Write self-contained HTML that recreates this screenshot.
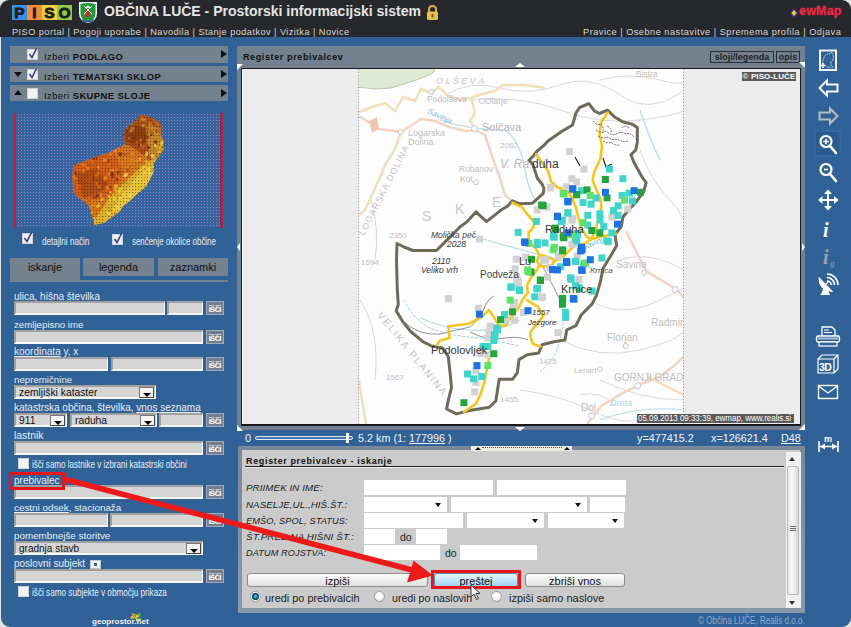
<!DOCTYPE html><html><head><meta charset="utf-8"><style>
*{margin:0;padding:0;box-sizing:border-box}
html,body{width:851px;height:627px;overflow:hidden;background:#e4e4e4;font-family:"Liberation Sans",sans-serif;font-size:10px}
.a{position:absolute}
.t{position:absolute;white-space:nowrap;line-height:12px}
.row{position:absolute;left:10px;width:218px;height:17px;background:#74828f}
.cb{position:absolute;width:11px;height:11px;background:#f2f2f4;border:1px solid #d0d0d0}
.lbl{position:absolute;left:14px;color:#e6ecf4;font-size:10px;white-space:nowrap;line-height:12px}
.inp{position:absolute;height:14px;background:#d5d5d5;border-top:2px solid #a0a0a0;border-left:2px solid #a0a0a0;border-bottom:2px solid #f8f8f8;border-right:1px solid #f8f8f8}
.isci{position:absolute;width:18px;height:14px;background:#727e8c;border:1px solid #a2adba;color:#f4f6f8;font-size:9.5px;font-weight:bold;line-height:13px;text-align:center;letter-spacing:-.9px;text-indent:-1px}
.dd{position:absolute;width:15px;height:11px;background:#f4f4f4;border:1px solid #777;border-right-color:#444;border-bottom-color:#444}
.dd:after{content:"";position:absolute;left:3px;top:5px;border-left:4px solid transparent;border-right:4px solid transparent;border-top:4px solid #000}
.fi{position:absolute;height:15px;background:#fff}
.fsel:after{content:"";position:absolute;right:6px;top:6px;border-left:3.5px solid transparent;border-right:3.5px solid transparent;border-top:4px solid #111}
.btn{position:absolute;height:14px;border:1px solid #8c8c8c;border-radius:3px;background:linear-gradient(#fefefe,#dedede);text-align:center;font-size:11px;line-height:14.5px;color:#111}
.rad{position:absolute;width:11px;height:11px;border-radius:50%;border:1px solid #a0a0a0;background:radial-gradient(circle at 45% 40%,#fff 30%,#d4d4d4)}
.it{position:absolute;font-style:italic;color:#222;white-space:nowrap;line-height:12px}
.cond{display:inline-block;transform-origin:0 50%}
</style></head><body><div class="a" style="left:0;top:0;width:851px;height:37px;background:#26282c;border-radius:9px 9px 0 0"></div><div class="a" style="left:1px;top:37px;width:850px;height:590px;background:#316297;border-radius:0 0 9px 9px"></div><div class="a" style="left:12px;top:5px;width:15px;height:15px;background:#3a8fe3;color:#1e1e1e;font:bold 15.5px/16px 'Liberation Sans';-webkit-text-stroke:.9px #1e1e1e;text-align:center">P</div><div class="a" style="left:27px;top:5px;width:15px;height:15px;background:#f28c3c;color:#1e1e1e;font:bold 15.5px/16px 'Liberation Sans';-webkit-text-stroke:.9px #1e1e1e;text-align:center">I</div><div class="a" style="left:42px;top:5px;width:15px;height:15px;background:#f4cf3e;color:#1e1e1e;font:bold 15.5px/16px 'Liberation Sans';-webkit-text-stroke:.9px #1e1e1e;text-align:center">S</div><div class="a" style="left:57px;top:5px;width:15px;height:15px;background:#8fcb47;color:#1e1e1e;font:bold 15.5px/16px 'Liberation Sans';-webkit-text-stroke:.9px #1e1e1e;text-align:center">O</div><svg class="a" style="left:78px;top:1px" width="20" height="23" viewBox="0 0 20 23">
<path d="M1 1 H19 V12 Q19 20 10 22 Q1 20 1 12 Z" fill="#f2f2f2"/>
<path d="M2.5 3 Q9 1 17.5 3 V12 Q17.5 19 10 21 Q2.5 19 2.5 12 Z" fill="#1f9a3a"/>
<path d="M4 18 Q10 22 16 18 L15 20 Q10 22.5 5 20Z" fill="#2a4fb8"/>
<rect x="8" y="8" width="4" height="8" fill="#d62828"/>
<path d="M10 4 L13 7 L7 7Z" fill="#e8e8e8"/>
<path d="M6 5 L14 13 M14 5 L6 13" stroke="#f0f0f0" stroke-width="1"/>
</svg><div class="t" style="left:104px;top:3px;font:bold 14px/16px 'Liberation Sans';color:#e4e4e4">OBČINA LUČE - Prostorski informacijski sistem</div><svg class="a" style="left:425px;top:4px" width="15" height="17" viewBox="0 0 15 17">
<path d="M4 8 V5.5 Q4 2 7.5 2 Q11 2 11 5.5 V8" fill="none" stroke="#d9b23a" stroke-width="2"/>
<rect x="2" y="7.5" width="11" height="8.5" rx="1.5" fill="#e6c14a"/>
<rect x="6.5" y="10" width="2" height="3.5" fill="#7a5a10"/>
</svg><div class="t" style="left:12px;top:25.5px;font-size:9.2px;letter-spacing:.45px;color:#d6d6d6">PISO portal | Pogoji uporabe | Navodila | Stanje podatkov | Vizitka | Novice</div><div class="t" style="left:583px;top:25.5px;font-size:9.2px;letter-spacing:.5px;color:#d6d6d6">Pravice | Osebne nastavitve | Spremema profila | Odjava</div><svg class="a" style="left:789px;top:7px" width="10" height="12" viewBox="0 0 10 12"><path d="M5 1 L9 6 L5 11 L1 6Z" fill="#5a1fa0"/><path d="M5 3 L7.5 6 L5 9 L2.5 6Z" fill="#c8e41a"/></svg><div class="t" style="left:799px;top:4px;font:bold 12.5px/15px 'Liberation Sans';color:#e82a3a;-webkit-text-stroke:.4px #e82a3a;text-shadow:0 0 1px #3a1a6a;letter-spacing:.2px">ewMap</div><div class="row" style="top:46px;height:17px"></div><div class="cb" style="left:27px;top:49px"><svg class="a" style="left:0;top:-2px" width="10" height="11" viewBox="0 0 10 11"><path d="M1.5 6 L4 9.5 L8.5 0.5" fill="none" stroke="#2f3f8f" stroke-width="1.6"/></svg></div><div class="t" style="left:44px;top:51px;font-size:9.4px;letter-spacing:.45px;color:#111">Izberi <b>PODLAGO</b></div><div class="a" style="left:221px;top:50px;width:0;height:0;border-top:4.5px solid transparent;border-bottom:4.5px solid transparent;border-left:6px solid #111"></div><div class="row" style="top:66px;height:16px"></div><div class="cb" style="left:27px;top:69px"><svg class="a" style="left:0;top:-2px" width="10" height="11" viewBox="0 0 10 11"><path d="M1.5 6 L4 9.5 L8.5 0.5" fill="none" stroke="#2f3f8f" stroke-width="1.6"/></svg></div><div class="t" style="left:44px;top:71px;font-size:9.4px;letter-spacing:.45px;color:#111">Izberi <b>TEMATSKI SKLOP</b></div><div class="a" style="left:221px;top:70px;width:0;height:0;border-top:4.5px solid transparent;border-bottom:4.5px solid transparent;border-left:6px solid #111"></div><div class="a" style="left:14px;top:72px;width:0;height:0;border-left:4px solid transparent;border-right:4px solid transparent;border-top:5px solid #111"></div><div class="row" style="top:85px;height:16px"></div><div class="cb" style="left:27px;top:88px"></div><div class="t" style="left:44px;top:90px;font-size:9.4px;letter-spacing:.45px;color:#111">Izberi <b>SKUPNE SLOJE</b></div><div class="a" style="left:221px;top:89px;width:0;height:0;border-top:4.5px solid transparent;border-bottom:4.5px solid transparent;border-left:6px solid #111"></div><div class="a" style="left:14px;top:90px;width:0;height:0;border-left:4px solid transparent;border-right:4px solid transparent;border-bottom:5px solid #111"></div><svg class="a" style="left:14px;top:113px" width="210" height="115" viewBox="0 0 210 115"><defs><pattern id="dots" width="3" height="3" patternUnits="userSpaceOnUse"><rect width="3" height="3" fill="#3564a0"/><rect x="1" y="1" width="1" height="1" fill="#9a82b0"/></pattern><pattern id="dk" width="3" height="3" patternUnits="userSpaceOnUse"><rect x="1" y="1" width="1.2" height="1.2" fill="#3a1a08" opacity=".55"/></pattern><clipPath id="mc"><polygon points="126.4,1.8 136.0,3.7 143.6,8.5 147.4,12.3 146.5,21.9 149.3,27.6 149.3,37.2 143.6,44.8 139.8,50.6 139.8,58.2 136.0,65.9 132.1,73.6 122.6,81.2 116.8,87.0 109.2,92.7 105.3,98.4 97.7,104.2 90.0,109.9 80.4,111.8 78.5,104.2 74.7,92.7 65.1,85.0 59.4,79.3 58.4,64.0 59.4,52.5 69.0,48.7 84.3,42.9 93.8,40.1 103.4,35.3 111.0,31.4 109.2,21.9 113.0,14.2 122.6,6.6"/></clipPath></defs><rect width="210" height="115" fill="url(#dots)"/><rect x="0" y="0" width="2" height="115" fill="#c02040"/><rect x="206" y="0" width="3" height="115" fill="#a02848"/><g clip-path="url(#mc)"><rect x="50" y="0" width="110" height="115" fill="#d8761c"/><polygon points="105,0 160,0 160,50 140,50 120,35 108,30" fill="#a8501a"/><polygon points="130,10 160,20 160,60 140,60 135,40" fill="#c88a28"/><polygon points="55,45 100,40 110,60 95,85 60,85" fill="#d2601a"/><polygon points="75,115 95,85 115,65 135,48 160,40 160,60 140,80 120,95 100,115" fill="#e0b42a"/><polygon points="100,90 125,62 150,45 145,70 120,90 105,105" fill="#ecd040" opacity=".8"/><polygon points="60,60 85,55 95,75 70,85" fill="#8a3a10" opacity=".5"/><polygon points="110,10 135,15 130,35 112,28" fill="#7a300c" opacity=".5"/><rect width="210" height="115" fill="url(#dk)"/><rect x="85.8" y="17.0" width="1.7" height="2.8" fill="#e0701a" opacity=".8"/><rect x="89.7" y="6.6" width="2.0" height="1.7" fill="#c85a18" opacity=".8"/><rect x="94.7" y="27.2" width="2.6" height="3.6" fill="#c85a18" opacity=".8"/><rect x="66.8" y="25.2" width="3.9" height="2.9" fill="#c85a18" opacity=".8"/><rect x="92.7" y="110.3" width="2.9" height="1.8" fill="#f0d040" opacity=".8"/><rect x="94.8" y="61.1" width="2.3" height="3.5" fill="#c85a18" opacity=".8"/><rect x="72.2" y="65.7" width="2.4" height="2.9" fill="#b84a12" opacity=".8"/><rect x="61.0" y="6.7" width="2.7" height="2.8" fill="#b84a12" opacity=".8"/><rect x="128.8" y="52.6" width="2.4" height="2.1" fill="#f4dc58" opacity=".8"/><rect x="72.1" y="88.1" width="2.9" height="2.8" fill="#e0701a" opacity=".8"/><rect x="138.1" y="82.4" width="3.0" height="1.7" fill="#7a2e0c" opacity=".8"/><rect x="103.6" y="18.6" width="1.9" height="2.7" fill="#7a2e0c" opacity=".8"/><rect x="58.7" y="75.5" width="2.9" height="3.7" fill="#c85a18" opacity=".8"/><rect x="84.8" y="78.6" width="2.7" height="3.5" fill="#c85a18" opacity=".8"/><rect x="61.5" y="10.6" width="2.7" height="3.2" fill="#7a2e0c" opacity=".8"/><rect x="60.8" y="79.3" width="4.0" height="3.6" fill="#c85a18" opacity=".8"/><rect x="82.0" y="43.6" width="1.6" height="2.7" fill="#7a2e0c" opacity=".8"/><rect x="71.0" y="13.2" width="2.0" height="2.2" fill="#e0701a" opacity=".8"/><rect x="125.1" y="45.0" width="1.7" height="2.6" fill="#f4dc58" opacity=".8"/><rect x="107.2" y="99.8" width="3.7" height="2.2" fill="#f4dc58" opacity=".8"/><rect x="94.5" y="40.5" width="3.9" height="1.9" fill="#f08a28" opacity=".8"/><rect x="71.7" y="26.2" width="1.5" height="3.6" fill="#b84a12" opacity=".8"/><rect x="72.3" y="31.9" width="2.5" height="2.4" fill="#b84a12" opacity=".8"/><rect x="108.8" y="107.7" width="3.9" height="3.1" fill="#c85a18" opacity=".8"/><rect x="125.3" y="51.6" width="2.5" height="2.5" fill="#c89020" opacity=".8"/><rect x="64.8" y="71.7" width="2.0" height="4.0" fill="#e0701a" opacity=".8"/><rect x="96.9" y="12.4" width="1.6" height="1.5" fill="#c85a18" opacity=".8"/><rect x="69.4" y="11.5" width="3.0" height="1.7" fill="#7a2e0c" opacity=".8"/><rect x="74.8" y="42.5" width="3.9" height="3.0" fill="#7a2e0c" opacity=".8"/><rect x="100.0" y="13.0" width="4.0" height="2.7" fill="#f08a28" opacity=".8"/><rect x="101.0" y="9.7" width="3.4" height="3.4" fill="#e0701a" opacity=".8"/><rect x="100.5" y="78.2" width="1.6" height="3.9" fill="#c89020" opacity=".8"/><rect x="105.2" y="16.6" width="3.8" height="3.4" fill="#c87020" opacity=".8"/><rect x="83.3" y="72.6" width="3.2" height="2.2" fill="#e0701a" opacity=".8"/><rect x="89.8" y="18.9" width="2.8" height="3.4" fill="#b84a12" opacity=".8"/><rect x="86.3" y="25.2" width="3.5" height="3.5" fill="#b84a12" opacity=".8"/><rect x="125.3" y="25.6" width="2.7" height="3.3" fill="#c87020" opacity=".8"/><rect x="149.0" y="89.3" width="2.1" height="3.2" fill="#f08a28" opacity=".8"/><rect x="145.9" y="50.5" width="3.9" height="2.4" fill="#d8a828" opacity=".8"/><rect x="75.9" y="25.6" width="2.3" height="2.7" fill="#b84a12" opacity=".8"/><rect x="148.6" y="69.0" width="2.7" height="3.1" fill="#e0701a" opacity=".8"/><rect x="131.0" y="9.6" width="3.8" height="3.5" fill="#8a3a10" opacity=".8"/><rect x="126.3" y="54.0" width="2.6" height="3.1" fill="#e8c030" opacity=".8"/><rect x="63.2" y="106.9" width="2.7" height="3.4" fill="#f4dc58" opacity=".8"/><rect x="63.1" y="18.0" width="1.6" height="3.0" fill="#b84a12" opacity=".8"/><rect x="99.2" y="74.1" width="3.6" height="4.0" fill="#c89020" opacity=".8"/><rect x="117.4" y="39.6" width="2.9" height="1.6" fill="#c87020" opacity=".8"/><rect x="130.9" y="82.1" width="2.8" height="3.8" fill="#f0d040" opacity=".8"/><rect x="96.2" y="98.5" width="1.6" height="2.0" fill="#e8c030" opacity=".8"/><rect x="102.6" y="86.3" width="2.1" height="2.5" fill="#d8a828" opacity=".8"/><rect x="67.5" y="102.8" width="3.7" height="3.2" fill="#d8a828" opacity=".8"/><rect x="132.4" y="58.4" width="1.8" height="1.9" fill="#c89020" opacity=".8"/><rect x="103.5" y="98.6" width="3.0" height="3.4" fill="#e8c030" opacity=".8"/><rect x="69.2" y="16.0" width="3.3" height="2.9" fill="#c85a18" opacity=".8"/><rect x="86.0" y="58.6" width="2.7" height="3.4" fill="#c85a18" opacity=".8"/><rect x="138.9" y="6.4" width="2.2" height="3.4" fill="#b8581a" opacity=".8"/><rect x="103.2" y="63.5" width="2.6" height="3.0" fill="#e0701a" opacity=".8"/><rect x="103.0" y="57.9" width="2.6" height="2.8" fill="#7a2e0c" opacity=".8"/><rect x="100.4" y="106.4" width="3.7" height="3.9" fill="#c89020" opacity=".8"/><rect x="79.7" y="63.2" width="3.6" height="1.8" fill="#b84a12" opacity=".8"/><rect x="66.6" y="50.0" width="3.2" height="2.6" fill="#e0701a" opacity=".8"/><rect x="75.2" y="34.2" width="3.7" height="1.9" fill="#e0701a" opacity=".8"/><rect x="123.0" y="74.6" width="2.1" height="1.8" fill="#e8c030" opacity=".8"/><rect x="99.4" y="84.4" width="2.5" height="2.7" fill="#f0d040" opacity=".8"/><rect x="149.0" y="94.1" width="3.3" height="4.0" fill="#b84a12" opacity=".8"/><rect x="93.4" y="47.6" width="2.3" height="3.3" fill="#7a2e0c" opacity=".8"/><rect x="56.9" y="62.6" width="3.3" height="2.5" fill="#f08a28" opacity=".8"/><rect x="104.2" y="33.4" width="1.8" height="3.8" fill="#e0701a" opacity=".8"/><rect x="76.7" y="99.0" width="2.2" height="1.6" fill="#f0d040" opacity=".8"/><rect x="129.0" y="30.6" width="3.5" height="3.6" fill="#b8581a" opacity=".8"/><rect x="119.2" y="106.9" width="1.9" height="3.8" fill="#f08a28" opacity=".8"/><rect x="109.2" y="79.1" width="2.2" height="3.5" fill="#f0d040" opacity=".8"/><rect x="72.4" y="101.2" width="3.8" height="3.1" fill="#d8a828" opacity=".8"/><rect x="131.2" y="9.5" width="1.7" height="3.7" fill="#b8581a" opacity=".8"/><rect x="98.1" y="38.3" width="2.5" height="3.8" fill="#c85a18" opacity=".8"/><rect x="114.1" y="4.9" width="3.8" height="3.9" fill="#b8581a" opacity=".8"/><rect x="79.9" y="20.5" width="3.1" height="2.8" fill="#7a2e0c" opacity=".8"/><rect x="74.6" y="50.4" width="2.2" height="3.5" fill="#b84a12" opacity=".8"/><rect x="149.5" y="4.2" width="3.3" height="2.9" fill="#8a3a10" opacity=".8"/><rect x="73.0" y="53.6" width="1.8" height="3.5" fill="#f08a28" opacity=".8"/><rect x="96.1" y="55.9" width="3.9" height="2.3" fill="#f08a28" opacity=".8"/><rect x="75.4" y="25.9" width="3.6" height="3.3" fill="#b84a12" opacity=".8"/><rect x="115.4" y="45.7" width="4.0" height="3.6" fill="#d88a28" opacity=".8"/><rect x="56.4" y="70.7" width="2.6" height="1.6" fill="#7a2e0c" opacity=".8"/><rect x="118.2" y="43.0" width="3.2" height="2.2" fill="#c87020" opacity=".8"/><rect x="78.0" y="33.1" width="2.0" height="2.2" fill="#f08a28" opacity=".8"/><rect x="55.3" y="41.1" width="3.9" height="2.9" fill="#7a2e0c" opacity=".8"/><rect x="78.2" y="109.1" width="2.0" height="2.0" fill="#d8a828" opacity=".8"/><rect x="86.9" y="9.5" width="2.8" height="2.0" fill="#7a2e0c" opacity=".8"/><rect x="102.9" y="0.6" width="3.5" height="1.9" fill="#7a2e0c" opacity=".8"/><rect x="110.7" y="44.5" width="2.3" height="2.1" fill="#d88a28" opacity=".8"/><rect x="110.6" y="59.8" width="3.1" height="3.3" fill="#e8c030" opacity=".8"/><rect x="138.5" y="44.0" width="3.3" height="2.7" fill="#d8a828" opacity=".8"/><rect x="82.0" y="69.9" width="1.6" height="3.6" fill="#b84a12" opacity=".8"/><rect x="139.7" y="70.9" width="1.8" height="2.8" fill="#c89020" opacity=".8"/><rect x="102.9" y="94.3" width="3.6" height="3.0" fill="#f0d040" opacity=".8"/><rect x="139.8" y="77.2" width="1.7" height="1.6" fill="#b84a12" opacity=".8"/><rect x="115.5" y="108.4" width="3.6" height="2.9" fill="#f08a28" opacity=".8"/><rect x="114.6" y="70.8" width="2.7" height="1.5" fill="#e8c030" opacity=".8"/><rect x="130.8" y="84.6" width="3.7" height="1.7" fill="#c85a18" opacity=".8"/><rect x="105.0" y="84.3" width="2.1" height="1.7" fill="#f4dc58" opacity=".8"/><rect x="80.2" y="82.4" width="2.1" height="3.1" fill="#b84a12" opacity=".8"/><rect x="98.7" y="95.5" width="2.7" height="3.2" fill="#f0d040" opacity=".8"/><rect x="127.9" y="69.7" width="1.7" height="1.9" fill="#e8c030" opacity=".8"/><rect x="79.1" y="84.0" width="3.1" height="1.8" fill="#7a2e0c" opacity=".8"/><rect x="100.8" y="54.9" width="3.2" height="3.2" fill="#e0701a" opacity=".8"/><rect x="82.6" y="58.4" width="2.7" height="3.4" fill="#f08a28" opacity=".8"/><rect x="149.4" y="62.0" width="3.9" height="3.8" fill="#d8a828" opacity=".8"/><rect x="56.7" y="51.9" width="3.9" height="2.6" fill="#c85a18" opacity=".8"/><rect x="80.5" y="23.7" width="1.7" height="1.7" fill="#b84a12" opacity=".8"/><rect x="126.0" y="29.6" width="1.8" height="3.6" fill="#d88a28" opacity=".8"/><rect x="103.3" y="100.2" width="2.1" height="3.7" fill="#d8a828" opacity=".8"/><rect x="101.2" y="2.8" width="3.9" height="3.2" fill="#e0701a" opacity=".8"/><rect x="93.5" y="82.2" width="2.4" height="2.3" fill="#f4dc58" opacity=".8"/><rect x="134.8" y="0.2" width="3.6" height="1.8" fill="#d88a28" opacity=".8"/><rect x="143.0" y="80.6" width="2.1" height="1.7" fill="#7a2e0c" opacity=".8"/><rect x="92.1" y="98.3" width="2.4" height="2.6" fill="#f0d040" opacity=".8"/><rect x="81.1" y="5.5" width="1.6" height="3.2" fill="#e0701a" opacity=".8"/><rect x="115.3" y="16.8" width="2.6" height="2.3" fill="#d88a28" opacity=".8"/><rect x="128.5" y="88.7" width="3.7" height="3.5" fill="#f08a28" opacity=".8"/><rect x="114.9" y="103.2" width="2.9" height="3.3" fill="#c85a18" opacity=".8"/><rect x="59.7" y="82.8" width="3.0" height="1.8" fill="#f08a28" opacity=".8"/><rect x="137.6" y="54.9" width="1.8" height="2.7" fill="#c89020" opacity=".8"/><rect x="87.6" y="33.6" width="2.5" height="2.1" fill="#7a2e0c" opacity=".8"/><rect x="100.9" y="75.6" width="1.9" height="1.9" fill="#f0d040" opacity=".8"/><rect x="74.7" y="102.4" width="2.9" height="2.6" fill="#f4dc58" opacity=".8"/><rect x="86.6" y="85.8" width="1.8" height="2.0" fill="#f4dc58" opacity=".8"/><rect x="63.6" y="38.6" width="2.3" height="2.4" fill="#e0701a" opacity=".8"/><rect x="131.9" y="22.8" width="3.4" height="2.5" fill="#8a3a10" opacity=".8"/><rect x="94.3" y="59.2" width="2.2" height="3.4" fill="#f08a28" opacity=".8"/><rect x="102.3" y="64.9" width="1.8" height="2.8" fill="#7a2e0c" opacity=".8"/><rect x="114.8" y="97.5" width="1.7" height="3.7" fill="#e8c030" opacity=".8"/><rect x="91.5" y="73.0" width="3.9" height="3.6" fill="#f08a28" opacity=".8"/><rect x="137.9" y="2.5" width="2.6" height="3.4" fill="#8a3a10" opacity=".8"/><rect x="131.4" y="109.4" width="1.5" height="2.5" fill="#f08a28" opacity=".8"/><rect x="143.0" y="93.3" width="3.9" height="2.1" fill="#f08a28" opacity=".8"/><rect x="65.4" y="17.4" width="3.9" height="1.8" fill="#c85a18" opacity=".8"/><rect x="133.4" y="79.2" width="1.7" height="3.4" fill="#f4dc58" opacity=".8"/><rect x="55.1" y="14.2" width="3.8" height="3.1" fill="#c85a18" opacity=".8"/><rect x="83.9" y="14.5" width="2.8" height="2.6" fill="#7a2e0c" opacity=".8"/><rect x="127.6" y="11.2" width="2.8" height="3.0" fill="#d88a28" opacity=".8"/><rect x="91.9" y="25.3" width="1.5" height="2.8" fill="#c85a18" opacity=".8"/><rect x="149.7" y="31.5" width="3.1" height="3.7" fill="#d8a828" opacity=".8"/><rect x="100.2" y="26.5" width="1.6" height="2.5" fill="#b84a12" opacity=".8"/><rect x="116.7" y="6.2" width="2.7" height="3.2" fill="#b8581a" opacity=".8"/><rect x="94.9" y="29.1" width="3.8" height="2.1" fill="#f08a28" opacity=".8"/><rect x="58.2" y="38.2" width="2.4" height="2.5" fill="#f08a28" opacity=".8"/><rect x="55.6" y="33.0" width="1.7" height="2.7" fill="#c85a18" opacity=".8"/><rect x="74.0" y="86.5" width="2.1" height="2.1" fill="#b84a12" opacity=".8"/><rect x="127.2" y="33.3" width="2.7" height="2.0" fill="#c87020" opacity=".8"/><rect x="76.2" y="47.1" width="3.9" height="1.9" fill="#e0701a" opacity=".8"/><rect x="92.4" y="24.1" width="1.9" height="1.6" fill="#c85a18" opacity=".8"/><rect x="60.7" y="44.4" width="3.3" height="4.0" fill="#7a2e0c" opacity=".8"/><rect x="143.5" y="37.2" width="3.1" height="2.8" fill="#e8c030" opacity=".8"/><rect x="99.4" y="35.2" width="3.6" height="4.0" fill="#f08a28" opacity=".8"/><rect x="97.0" y="12.3" width="2.2" height="2.4" fill="#e0701a" opacity=".8"/><rect x="145.8" y="14.0" width="2.5" height="3.4" fill="#b8581a" opacity=".8"/><rect x="84.3" y="90.8" width="1.6" height="2.7" fill="#f0d040" opacity=".8"/><rect x="90.4" y="103.9" width="2.3" height="3.3" fill="#e8c030" opacity=".8"/><rect x="100.1" y="71.4" width="3.5" height="3.4" fill="#e8c030" opacity=".8"/><rect x="58.9" y="3.9" width="3.5" height="1.7" fill="#e0701a" opacity=".8"/><rect x="73.5" y="7.1" width="2.3" height="2.2" fill="#c85a18" opacity=".8"/><rect x="146.0" y="69.7" width="3.4" height="3.2" fill="#7a2e0c" opacity=".8"/><rect x="142.8" y="33.6" width="3.8" height="3.1" fill="#c89020" opacity=".8"/><rect x="144.6" y="2.7" width="1.8" height="3.3" fill="#b8581a" opacity=".8"/><rect x="99.2" y="87.7" width="3.8" height="3.5" fill="#d8a828" opacity=".8"/><rect x="67.6" y="56.1" width="3.5" height="3.3" fill="#e0701a" opacity=".8"/><rect x="133.2" y="87.3" width="2.1" height="3.7" fill="#c85a18" opacity=".8"/><rect x="98.8" y="88.6" width="1.7" height="2.0" fill="#c89020" opacity=".8"/><rect x="126.5" y="27.9" width="3.1" height="2.7" fill="#8a3a10" opacity=".8"/><rect x="106.7" y="18.2" width="3.7" height="4.0" fill="#6a2a0a" opacity=".8"/><rect x="80.2" y="9.5" width="2.6" height="4.0" fill="#e0701a" opacity=".8"/><rect x="147.4" y="19.6" width="2.5" height="3.1" fill="#b8581a" opacity=".8"/><rect x="119.0" y="84.5" width="3.4" height="2.2" fill="#f0d040" opacity=".8"/><rect x="81.5" y="30.2" width="3.3" height="2.0" fill="#7a2e0c" opacity=".8"/><rect x="78.5" y="27.7" width="2.2" height="3.8" fill="#b84a12" opacity=".8"/><rect x="72.9" y="7.3" width="4.0" height="2.8" fill="#7a2e0c" opacity=".8"/><rect x="77.0" y="91.4" width="4.0" height="1.8" fill="#f08a28" opacity=".8"/><rect x="100.1" y="92.6" width="3.8" height="1.6" fill="#f4dc58" opacity=".8"/><rect x="82.9" y="13.5" width="3.0" height="3.6" fill="#b84a12" opacity=".8"/><rect x="73.4" y="8.5" width="3.7" height="2.6" fill="#c85a18" opacity=".8"/><rect x="79.7" y="87.9" width="1.8" height="3.0" fill="#e0701a" opacity=".8"/><rect x="113.9" y="24.6" width="2.4" height="1.6" fill="#d88a28" opacity=".8"/><rect x="150.0" y="4.3" width="3.5" height="3.5" fill="#b8581a" opacity=".8"/><rect x="93.9" y="42.0" width="2.3" height="2.0" fill="#c85a18" opacity=".8"/><rect x="130.6" y="61.9" width="2.5" height="3.5" fill="#f0d040" opacity=".8"/><rect x="118.1" y="17.5" width="1.7" height="1.9" fill="#c87020" opacity=".8"/><rect x="121.1" y="46.3" width="3.2" height="2.5" fill="#d88a28" opacity=".8"/><rect x="59.9" y="84.2" width="2.5" height="1.5" fill="#7a2e0c" opacity=".8"/><rect x="127.8" y="90.7" width="2.5" height="2.5" fill="#b84a12" opacity=".8"/><rect x="144.5" y="49.1" width="2.6" height="3.6" fill="#e8c030" opacity=".8"/><rect x="93.6" y="99.8" width="3.4" height="1.8" fill="#f4dc58" opacity=".8"/><rect x="59.9" y="16.1" width="1.7" height="3.1" fill="#f08a28" opacity=".8"/><rect x="90.2" y="57.0" width="2.4" height="1.9" fill="#b84a12" opacity=".8"/><rect x="71.3" y="7.6" width="2.7" height="3.5" fill="#f08a28" opacity=".8"/><rect x="146.9" y="22.3" width="3.6" height="1.6" fill="#b8581a" opacity=".8"/><rect x="141.7" y="35.5" width="3.8" height="2.5" fill="#c89020" opacity=".8"/><rect x="140.9" y="70.1" width="3.1" height="3.6" fill="#e8c030" opacity=".8"/><rect x="114.0" y="69.5" width="3.6" height="2.0" fill="#e8c030" opacity=".8"/><rect x="75.7" y="45.2" width="1.9" height="2.4" fill="#c85a18" opacity=".8"/><rect x="69.2" y="109.7" width="1.6" height="2.9" fill="#e8c030" opacity=".8"/><rect x="127.0" y="4.3" width="1.8" height="3.0" fill="#d88a28" opacity=".8"/><rect x="107.3" y="70.9" width="3.1" height="2.3" fill="#d8a828" opacity=".8"/><rect x="78.7" y="44.0" width="2.6" height="2.6" fill="#7a2e0c" opacity=".8"/><rect x="57.2" y="69.9" width="2.7" height="2.6" fill="#f08a28" opacity=".8"/><rect x="113.8" y="92.5" width="3.5" height="2.5" fill="#e8c030" opacity=".8"/><rect x="61.4" y="40.5" width="1.7" height="2.6" fill="#7a2e0c" opacity=".8"/><rect x="103.5" y="4.6" width="1.7" height="3.3" fill="#b84a12" opacity=".8"/><rect x="128.9" y="57.8" width="3.4" height="3.7" fill="#f0d040" opacity=".8"/><rect x="117.0" y="88.6" width="3.6" height="4.0" fill="#f0d040" opacity=".8"/><rect x="124.5" y="92.1" width="1.8" height="3.7" fill="#b84a12" opacity=".8"/><rect x="82.3" y="91.6" width="3.2" height="3.3" fill="#e8c030" opacity=".8"/><rect x="76.0" y="94.1" width="3.4" height="1.9" fill="#c89020" opacity=".8"/><rect x="140.2" y="31.1" width="1.9" height="2.8" fill="#f4dc58" opacity=".8"/><rect x="142.4" y="23.5" width="3.0" height="2.1" fill="#d88a28" opacity=".8"/><rect x="90.4" y="22.5" width="1.9" height="3.8" fill="#f08a28" opacity=".8"/><rect x="119.6" y="101.2" width="3.5" height="2.2" fill="#b84a12" opacity=".8"/><rect x="128.0" y="5.5" width="3.9" height="2.6" fill="#d88a28" opacity=".8"/><rect x="104.5" y="77.8" width="2.1" height="2.8" fill="#f0d040" opacity=".8"/><rect x="136.4" y="83.4" width="2.2" height="4.0" fill="#7a2e0c" opacity=".8"/><rect x="109.8" y="40.7" width="2.6" height="1.9" fill="#8a3a10" opacity=".8"/><rect x="125.6" y="5.5" width="2.1" height="3.1" fill="#c87020" opacity=".8"/><rect x="148.5" y="66.2" width="3.3" height="3.4" fill="#7a2e0c" opacity=".8"/><rect x="76.1" y="32.9" width="2.5" height="2.4" fill="#f08a28" opacity=".8"/><rect x="59.5" y="55.2" width="3.1" height="1.6" fill="#c85a18" opacity=".8"/><rect x="55.2" y="40.1" width="2.8" height="2.8" fill="#e0701a" opacity=".8"/><rect x="94.3" y="34.0" width="2.0" height="3.1" fill="#b84a12" opacity=".8"/><rect x="100.1" y="15.2" width="3.3" height="2.6" fill="#b84a12" opacity=".8"/><rect x="61.0" y="16.4" width="2.5" height="2.2" fill="#7a2e0c" opacity=".8"/><rect x="56.1" y="72.9" width="3.7" height="3.0" fill="#c85a18" opacity=".8"/><rect x="110.0" y="68.0" width="3.3" height="2.1" fill="#c89020" opacity=".8"/><rect x="140.8" y="5.0" width="1.6" height="2.0" fill="#c87020" opacity=".8"/><rect x="70.1" y="103.0" width="1.5" height="2.9" fill="#f0d040" opacity=".8"/><rect x="144.4" y="16.1" width="2.8" height="3.1" fill="#b8581a" opacity=".8"/><rect x="116.5" y="46.9" width="1.9" height="2.3" fill="#c87020" opacity=".8"/><rect x="83.5" y="5.5" width="3.3" height="1.5" fill="#f08a28" opacity=".8"/><rect x="135.2" y="84.2" width="1.7" height="3.1" fill="#f08a28" opacity=".8"/><rect x="71.7" y="112.6" width="2.1" height="1.6" fill="#d8a828" opacity=".8"/><rect x="86.9" y="84.7" width="3.3" height="2.2" fill="#d8a828" opacity=".8"/><rect x="107.6" y="49.3" width="3.9" height="2.2" fill="#c87020" opacity=".8"/><rect x="143.2" y="101.0" width="3.7" height="1.5" fill="#e0701a" opacity=".8"/><rect x="79.7" y="26.7" width="3.9" height="3.4" fill="#b84a12" opacity=".8"/><rect x="86.1" y="99.5" width="3.0" height="2.4" fill="#d8a828" opacity=".8"/><rect x="135.9" y="104.1" width="2.7" height="3.6" fill="#c85a18" opacity=".8"/><rect x="121.3" y="96.9" width="3.9" height="2.1" fill="#f08a28" opacity=".8"/><rect x="139.1" y="89.2" width="3.1" height="1.7" fill="#f08a28" opacity=".8"/><rect x="141.5" y="16.3" width="1.8" height="3.1" fill="#8a3a10" opacity=".8"/><rect x="70.4" y="110.4" width="1.6" height="1.8" fill="#f0d040" opacity=".8"/><rect x="116.1" y="4.8" width="3.3" height="1.7" fill="#8a3a10" opacity=".8"/><rect x="111.1" y="41.1" width="3.7" height="1.7" fill="#c87020" opacity=".8"/><rect x="137.4" y="103.3" width="1.8" height="2.0" fill="#f08a28" opacity=".8"/><rect x="65.6" y="3.9" width="3.6" height="3.1" fill="#e0701a" opacity=".8"/><rect x="82.3" y="11.3" width="3.5" height="3.1" fill="#e0701a" opacity=".8"/><rect x="83.0" y="38.0" width="1.6" height="2.1" fill="#7a2e0c" opacity=".8"/><rect x="81.8" y="80.9" width="3.8" height="3.4" fill="#7a2e0c" opacity=".8"/><rect x="112.2" y="53.8" width="3.0" height="1.6" fill="#d88a28" opacity=".8"/><rect x="94.2" y="49.3" width="2.4" height="3.3" fill="#e0701a" opacity=".8"/><rect x="106.1" y="24.5" width="2.9" height="2.2" fill="#8a3a10" opacity=".8"/><rect x="96.4" y="59.2" width="3.4" height="3.9" fill="#7a2e0c" opacity=".8"/><rect x="55.4" y="55.5" width="3.2" height="3.6" fill="#f08a28" opacity=".8"/><rect x="146.9" y="67.0" width="2.2" height="3.9" fill="#c89020" opacity=".8"/><rect x="82.0" y="24.3" width="2.7" height="1.8" fill="#b84a12" opacity=".8"/><rect x="115.5" y="9.1" width="3.5" height="3.1" fill="#c87020" opacity=".8"/><rect x="88.8" y="45.3" width="3.7" height="3.4" fill="#f08a28" opacity=".8"/><rect x="95.1" y="73.0" width="2.0" height="2.2" fill="#7a2e0c" opacity=".8"/><rect x="140.6" y="56.6" width="4.0" height="3.1" fill="#f4dc58" opacity=".8"/><rect x="144.7" y="14.3" width="3.4" height="3.4" fill="#c87020" opacity=".8"/><rect x="116.4" y="39.4" width="2.8" height="3.7" fill="#d88a28" opacity=".8"/><rect x="97.8" y="62.6" width="1.9" height="2.6" fill="#7a2e0c" opacity=".8"/><rect x="128.5" y="65.4" width="2.3" height="3.1" fill="#e8c030" opacity=".8"/><rect x="121.2" y="57.4" width="2.3" height="3.3" fill="#d8a828" opacity=".8"/><rect x="135.1" y="17.5" width="3.9" height="3.3" fill="#b8581a" opacity=".8"/><rect x="112.3" y="39.4" width="2.3" height="2.0" fill="#b8581a" opacity=".8"/><rect x="147.6" y="82.3" width="1.9" height="3.1" fill="#e0701a" opacity=".8"/><rect x="73.6" y="17.1" width="3.5" height="3.3" fill="#b84a12" opacity=".8"/><rect x="96.3" y="22.2" width="2.2" height="3.7" fill="#e0701a" opacity=".8"/><rect x="99.1" y="1.4" width="3.2" height="2.8" fill="#f08a28" opacity=".8"/><rect x="115.1" y="52.4" width="2.1" height="3.3" fill="#b8581a" opacity=".8"/><rect x="55.5" y="27.4" width="3.3" height="3.0" fill="#f08a28" opacity=".8"/><rect x="116.5" y="95.6" width="3.6" height="3.2" fill="#c89020" opacity=".8"/><rect x="115.9" y="51.3" width="2.1" height="3.3" fill="#d88a28" opacity=".8"/><rect x="140.0" y="27.4" width="3.3" height="3.1" fill="#6a2a0a" opacity=".8"/><rect x="78.8" y="47.9" width="1.5" height="3.6" fill="#f08a28" opacity=".8"/><rect x="104.2" y="74.7" width="3.7" height="2.3" fill="#e8c030" opacity=".8"/><rect x="56.0" y="94.0" width="1.6" height="2.9" fill="#e0701a" opacity=".8"/><rect x="70.3" y="88.3" width="2.8" height="1.8" fill="#b84a12" opacity=".8"/><rect x="109.6" y="61.1" width="2.8" height="3.1" fill="#f4dc58" opacity=".8"/><rect x="133.8" y="59.0" width="3.4" height="2.6" fill="#f4dc58" opacity=".8"/><rect x="149.1" y="20.8" width="3.4" height="1.8" fill="#c87020" opacity=".8"/><rect x="148.5" y="40.2" width="2.1" height="2.5" fill="#f0d040" opacity=".8"/><rect x="60.8" y="8.5" width="3.1" height="3.2" fill="#f08a28" opacity=".8"/><rect x="110.1" y="12.3" width="3.4" height="3.8" fill="#d88a28" opacity=".8"/><rect x="105.1" y="24.7" width="2.7" height="1.9" fill="#6a2a0a" opacity=".8"/><rect x="143.3" y="7.8" width="2.7" height="2.9" fill="#b8581a" opacity=".8"/><rect x="76.5" y="108.9" width="3.2" height="3.6" fill="#d8a828" opacity=".8"/><rect x="130.5" y="46.7" width="3.4" height="3.1" fill="#d8a828" opacity=".8"/><rect x="129.1" y="53.0" width="2.2" height="2.4" fill="#e8c030" opacity=".8"/><rect x="79.1" y="48.1" width="2.7" height="3.5" fill="#b84a12" opacity=".8"/><rect x="130.9" y="40.5" width="2.3" height="2.7" fill="#d8a828" opacity=".8"/><rect x="114.2" y="9.7" width="1.9" height="2.3" fill="#d88a28" opacity=".8"/><rect x="91.6" y="9.6" width="3.8" height="3.5" fill="#c85a18" opacity=".8"/><rect x="68.3" y="93.9" width="1.5" height="1.5" fill="#c85a18" opacity=".8"/><rect x="145.4" y="74.1" width="3.0" height="2.9" fill="#7a2e0c" opacity=".8"/><rect x="136.1" y="21.0" width="2.4" height="1.9" fill="#6a2a0a" opacity=".8"/><rect x="140.9" y="89.5" width="3.0" height="3.2" fill="#b84a12" opacity=".8"/><rect x="147.8" y="10.2" width="3.5" height="3.6" fill="#c87020" opacity=".8"/><rect x="73.8" y="78.3" width="1.7" height="3.6" fill="#c85a18" opacity=".8"/><rect x="118.8" y="13.2" width="2.2" height="2.1" fill="#8a3a10" opacity=".8"/><rect x="68.2" y="55.7" width="2.7" height="3.8" fill="#e0701a" opacity=".8"/><rect x="121.5" y="27.9" width="2.8" height="3.7" fill="#b8581a" opacity=".8"/><rect x="55.6" y="95.0" width="3.2" height="2.7" fill="#f08a28" opacity=".8"/><rect x="83.2" y="52.6" width="2.5" height="3.9" fill="#f08a28" opacity=".8"/><rect x="62.2" y="72.0" width="1.6" height="1.6" fill="#e0701a" opacity=".8"/><rect x="125.0" y="112.9" width="2.8" height="2.7" fill="#e0701a" opacity=".8"/><rect x="140.3" y="3.8" width="3.1" height="2.3" fill="#6a2a0a" opacity=".8"/><rect x="136.9" y="41.4" width="3.4" height="2.9" fill="#f4dc58" opacity=".8"/><rect x="141.7" y="32.1" width="2.6" height="2.9" fill="#d8a828" opacity=".8"/><rect x="133.5" y="33.1" width="2.5" height="2.8" fill="#6a2a0a" opacity=".8"/><rect x="80.8" y="57.2" width="3.1" height="3.5" fill="#b84a12" opacity=".8"/><rect x="86.4" y="35.8" width="1.8" height="3.9" fill="#7a2e0c" opacity=".8"/><rect x="63.3" y="112.6" width="3.3" height="3.7" fill="#f4dc58" opacity=".8"/><rect x="106.8" y="5.6" width="1.8" height="1.6" fill="#d88a28" opacity=".8"/><rect x="133.1" y="53.7" width="3.5" height="3.8" fill="#f0d040" opacity=".8"/><rect x="113.1" y="69.7" width="3.7" height="1.7" fill="#c89020" opacity=".8"/><rect x="58.8" y="71.6" width="1.8" height="2.0" fill="#b84a12" opacity=".8"/><rect x="58.5" y="87.5" width="2.4" height="3.6" fill="#e0701a" opacity=".8"/><rect x="129.7" y="63.5" width="3.7" height="2.0" fill="#d8a828" opacity=".8"/><rect x="58.3" y="2.3" width="3.1" height="3.8" fill="#c85a18" opacity=".8"/><rect x="60.2" y="64.1" width="3.6" height="3.4" fill="#e0701a" opacity=".8"/><rect x="95.0" y="78.6" width="2.6" height="1.5" fill="#f4dc58" opacity=".8"/><rect x="91.8" y="66.9" width="2.7" height="2.5" fill="#b84a12" opacity=".8"/><rect x="64.7" y="72.8" width="3.7" height="3.1" fill="#b84a12" opacity=".8"/><rect x="95.6" y="1.1" width="4.0" height="3.6" fill="#e0701a" opacity=".8"/><rect x="75.7" y="13.7" width="1.5" height="3.3" fill="#f08a28" opacity=".8"/><rect x="78.0" y="82.9" width="3.8" height="2.4" fill="#b84a12" opacity=".8"/><rect x="126.0" y="78.5" width="3.3" height="1.7" fill="#e8c030" opacity=".8"/><rect x="114.7" y="80.1" width="3.2" height="3.7" fill="#f4dc58" opacity=".8"/><rect x="141.8" y="6.0" width="1.5" height="1.5" fill="#8a3a10" opacity=".8"/><rect x="116.8" y="92.4" width="2.5" height="2.3" fill="#f0d040" opacity=".8"/><rect x="112.0" y="108.2" width="3.0" height="2.3" fill="#f08a28" opacity=".8"/><rect x="145.1" y="82.2" width="3.2" height="1.9" fill="#f08a28" opacity=".8"/><rect x="130.7" y="41.0" width="3.1" height="2.5" fill="#e8c030" opacity=".8"/><rect x="91.6" y="88.8" width="3.5" height="2.9" fill="#d8a828" opacity=".8"/><rect x="82.8" y="6.9" width="2.3" height="3.0" fill="#c85a18" opacity=".8"/><rect x="147.9" y="93.9" width="3.6" height="3.0" fill="#c85a18" opacity=".8"/><rect x="147.8" y="27.8" width="3.2" height="3.0" fill="#f4dc58" opacity=".8"/><rect x="140.1" y="91.2" width="3.2" height="2.3" fill="#7a2e0c" opacity=".8"/><rect x="80.5" y="17.8" width="2.2" height="1.9" fill="#e0701a" opacity=".8"/><rect x="139.6" y="112.2" width="2.2" height="3.6" fill="#b84a12" opacity=".8"/><rect x="131.7" y="77.4" width="2.4" height="1.7" fill="#f4dc58" opacity=".8"/><rect x="107.6" y="90.1" width="3.5" height="3.3" fill="#e8c030" opacity=".8"/><rect x="148.3" y="35.0" width="3.2" height="2.7" fill="#f0d040" opacity=".8"/><rect x="74.6" y="28.8" width="3.5" height="2.6" fill="#e0701a" opacity=".8"/><rect x="63.3" y="91.1" width="2.1" height="2.9" fill="#e0701a" opacity=".8"/><rect x="140.2" y="100.0" width="2.3" height="2.8" fill="#c85a18" opacity=".8"/><rect x="74.2" y="24.0" width="2.0" height="3.3" fill="#e0701a" opacity=".8"/><rect x="89.5" y="63.8" width="3.4" height="3.6" fill="#f08a28" opacity=".8"/><rect x="78.4" y="104.3" width="2.4" height="1.8" fill="#f4dc58" opacity=".8"/><rect x="115.1" y="89.0" width="2.3" height="1.6" fill="#e8c030" opacity=".8"/><rect x="81.7" y="68.6" width="1.6" height="4.0" fill="#e0701a" opacity=".8"/><rect x="137.3" y="55.0" width="2.0" height="3.8" fill="#c89020" opacity=".8"/><rect x="81.6" y="11.0" width="3.4" height="3.5" fill="#f08a28" opacity=".8"/><rect x="146.5" y="28.7" width="2.3" height="4.0" fill="#f0d040" opacity=".8"/><rect x="90.9" y="3.1" width="2.9" height="3.7" fill="#e0701a" opacity=".8"/><rect x="98.5" y="107.0" width="3.7" height="3.1" fill="#f0d040" opacity=".8"/><rect x="142.6" y="79.8" width="2.1" height="2.9" fill="#e0701a" opacity=".8"/><rect x="115.9" y="108.1" width="2.5" height="2.6" fill="#c85a18" opacity=".8"/><rect x="70.2" y="109.1" width="1.9" height="3.9" fill="#e8c030" opacity=".8"/><rect x="144.4" y="6.7" width="3.8" height="3.6" fill="#c87020" opacity=".8"/><rect x="59.5" y="88.9" width="1.6" height="1.9" fill="#f08a28" opacity=".8"/><rect x="126.7" y="106.2" width="3.0" height="2.6" fill="#7a2e0c" opacity=".8"/><rect x="117.0" y="53.2" width="2.1" height="1.8" fill="#d8a828" opacity=".8"/><rect x="100.7" y="19.0" width="3.5" height="3.8" fill="#b84a12" opacity=".8"/><rect x="139.8" y="52.9" width="3.5" height="1.9" fill="#e8c030" opacity=".8"/><rect x="134.1" y="8.8" width="3.7" height="3.7" fill="#c87020" opacity=".8"/><rect x="68.3" y="50.5" width="3.8" height="2.5" fill="#e0701a" opacity=".8"/><rect x="57.1" y="8.5" width="2.3" height="2.1" fill="#7a2e0c" opacity=".8"/><rect x="66.0" y="41.4" width="2.1" height="1.6" fill="#7a2e0c" opacity=".8"/><rect x="122.8" y="62.5" width="2.6" height="1.9" fill="#e8c030" opacity=".8"/><rect x="94.7" y="27.9" width="2.2" height="3.6" fill="#e0701a" opacity=".8"/><rect x="86.8" y="19.0" width="1.8" height="2.6" fill="#f08a28" opacity=".8"/><rect x="100.8" y="17.3" width="1.6" height="3.7" fill="#c85a18" opacity=".8"/><rect x="118.5" y="23.9" width="3.6" height="1.8" fill="#6a2a0a" opacity=".8"/><rect x="126.7" y="109.7" width="4.0" height="4.0" fill="#f08a28" opacity=".8"/><rect x="142.9" y="11.0" width="2.5" height="1.9" fill="#d88a28" opacity=".8"/><rect x="134.1" y="110.6" width="3.9" height="1.5" fill="#b84a12" opacity=".8"/><rect x="131.7" y="38.5" width="2.6" height="3.5" fill="#e8c030" opacity=".8"/><rect x="144.6" y="32.4" width="2.6" height="3.8" fill="#d8a828" opacity=".8"/><rect x="75.7" y="64.6" width="3.6" height="2.8" fill="#b84a12" opacity=".8"/><rect x="76.9" y="19.8" width="1.7" height="1.7" fill="#c85a18" opacity=".8"/><rect x="112.8" y="56.0" width="1.9" height="1.8" fill="#7a2e0c" opacity=".8"/><rect x="118.6" y="71.0" width="3.0" height="2.0" fill="#e8c030" opacity=".8"/><rect x="61.2" y="82.8" width="3.6" height="3.8" fill="#f08a28" opacity=".8"/><rect x="104.3" y="39.3" width="3.6" height="3.7" fill="#7a2e0c" opacity=".8"/><rect x="101.8" y="1.7" width="1.8" height="3.2" fill="#f08a28" opacity=".8"/><rect x="78.6" y="63.6" width="1.6" height="3.3" fill="#7a2e0c" opacity=".8"/><rect x="109.6" y="97.0" width="2.8" height="2.6" fill="#d8a828" opacity=".8"/><rect x="104.0" y="13.6" width="3.5" height="3.7" fill="#b84a12" opacity=".8"/><rect x="85.5" y="80.4" width="2.9" height="3.7" fill="#f08a28" opacity=".8"/><rect x="82.7" y="12.2" width="2.6" height="1.6" fill="#f08a28" opacity=".8"/><rect x="131.4" y="15.2" width="3.9" height="2.1" fill="#b8581a" opacity=".8"/><rect x="72.3" y="11.6" width="2.9" height="3.9" fill="#7a2e0c" opacity=".8"/><rect x="56.8" y="104.7" width="2.2" height="3.6" fill="#b84a12" opacity=".8"/><rect x="115.5" y="52.4" width="3.3" height="1.8" fill="#b8581a" opacity=".8"/><rect x="137.6" y="81.0" width="2.2" height="2.7" fill="#e0701a" opacity=".8"/><rect x="110.7" y="86.1" width="1.8" height="2.5" fill="#f0d040" opacity=".8"/><rect x="68.0" y="66.9" width="1.9" height="2.9" fill="#b84a12" opacity=".8"/><rect x="125.9" y="18.6" width="3.8" height="2.5" fill="#8a3a10" opacity=".8"/><rect x="94.9" y="94.9" width="1.6" height="3.9" fill="#c89020" opacity=".8"/><rect x="59.9" y="41.0" width="2.1" height="2.3" fill="#f08a28" opacity=".8"/><rect x="96.4" y="110.9" width="3.5" height="3.6" fill="#d8a828" opacity=".8"/><rect x="60.1" y="58.5" width="2.1" height="2.6" fill="#7a2e0c" opacity=".8"/><rect x="115.1" y="41.2" width="2.0" height="2.3" fill="#c87020" opacity=".8"/><rect x="74.1" y="75.6" width="1.8" height="3.9" fill="#b84a12" opacity=".8"/><rect x="128.8" y="105.9" width="3.5" height="3.7" fill="#e0701a" opacity=".8"/><rect x="139.0" y="3.9" width="2.2" height="3.2" fill="#c87020" opacity=".8"/><rect x="81.0" y="61.3" width="3.1" height="2.1" fill="#e0701a" opacity=".8"/><rect x="104.4" y="49.0" width="2.2" height="2.3" fill="#e0701a" opacity=".8"/><rect x="116.5" y="13.6" width="3.9" height="3.8" fill="#c87020" opacity=".8"/><rect x="140.6" y="9.5" width="2.8" height="1.9" fill="#c87020" opacity=".8"/></g></svg><div class="cb" style="left:22px;top:233px"><svg class="a" style="left:0;top:-2px" width="10" height="11" viewBox="0 0 10 11"><path d="M1.5 6 L4 9.5 L8.5 0.5" fill="none" stroke="#2f3f8f" stroke-width="1.6"/></svg></div><div class="t" style="left:42px;top:236px;font-size:10px;color:#e6ecf4"><span class="cond" style="transform:scaleX(.81)">detajlni način</span></div><div class="cb" style="left:112px;top:234px"><svg class="a" style="left:0;top:-2px" width="10" height="11" viewBox="0 0 10 11"><path d="M1.5 6 L4 9.5 L8.5 0.5" fill="none" stroke="#2f3f8f" stroke-width="1.6"/></svg></div><div class="t" style="left:132px;top:236px;font-size:10px;color:#e6ecf4"><span class="cond" style="transform:scaleX(.79)">senčenje okolice občine</span></div><div class="a" style="left:10px;top:258px;width:70px;height:24px;background:#74828f"></div><div class="a" style="left:83px;top:258px;width:71px;height:18px;background:#74828f"></div><div class="a" style="left:158px;top:258px;width:70px;height:18px;background:#74828f"></div><div class="a" style="left:10px;top:280px;width:218px;height:2px;background:#74828f"></div><div class="t" style="left:10px;top:261px;width:70px;text-align:center;font-size:11px;color:#111">iskanje</div><div class="t" style="left:83px;top:261px;width:71px;text-align:center;font-size:11px;color:#111">legenda</div><div class="t" style="left:158px;top:261px;width:70px;text-align:center;font-size:11px;color:#111">zaznamki</div><div class="lbl" style="top:291px;font-size:10px">ulica, hišna številka</div><div class="inp" style="left:14px;top:301px;width:151px;height:14px"></div><div class="inp" style="left:167px;top:301px;width:36px;height:14px"></div><div class="isci" style="left:206px;top:301px">išči</div><div class="lbl" style="top:319px;font-size:9.7px">zemljepisno ime</div><div class="inp" style="left:14px;top:330px;width:189px;height:14px"></div><div class="isci" style="left:206px;top:330px">išči</div><div class="lbl" style="top:346px;font-size:10px"><u>koordinata</u> y, x</div><div class="inp" style="left:14px;top:357px;width:94px;height:14px"></div><div class="inp" style="left:111px;top:357px;width:92px;height:14px"></div><div class="isci" style="left:206px;top:357px">išči</div><div class="lbl" style="top:374px;font-size:9.7px">nepremičnine</div><div class="inp" style="left:14px;top:385px;width:142px;height:14px"></div><div class="dd" style="left:139px;top:387px"></div><div class="t" style="left:19px;top:387px;font-size:10.3px;color:#111">zemljiški kataster</div><div class="lbl" style="top:402px;font-size:10px">katastrska občina, številka, <u>vnos seznama</u></div><div class="inp" style="left:14px;top:413px;width:53px;height:14px"></div><div class="dd" style="left:50px;top:415px"></div><div class="t" style="left:19px;top:415px;font-size:10.3px;color:#111">911</div><div class="inp" style="left:70px;top:413px;width:87px;height:14px"></div><div class="dd" style="left:140px;top:415px"></div><div class="t" style="left:75px;top:415px;font-size:10.3px;color:#111">raduha</div><div class="inp" style="left:159px;top:413px;width:44px;height:14px"></div><div class="isci" style="left:206px;top:413px">išči</div><div class="lbl" style="top:430px;font-size:10.4px">lastnik</div><div class="inp" style="left:14px;top:441px;width:189px;height:14px"></div><div class="isci" style="left:206px;top:441px">išči</div><div class="cb" style="left:18px;top:458px"></div><div class="t" style="left:32px;top:459px;font-size:10px;color:#e6ecf4"><span class="cond" style="transform:scaleX(.805)">išči samo lastnike v izbrani katastrski občini</span></div><div class="lbl" style="top:475px;font-size:10px"><u>prebivalec</u></div><div class="inp" style="left:14px;top:485px;width:189px;height:14px"></div><div class="isci" style="left:206px;top:485px">išči</div><div class="lbl" style="top:502px;font-size:9.85px"><u>cestni odsek</u>, stacionaža</div><div class="inp" style="left:14px;top:513px;width:94px;height:14px"></div><div class="inp" style="left:110px;top:513px;width:93px;height:14px"></div><div class="isci" style="left:206px;top:513px">išči</div><div class="lbl" style="top:530px;font-size:9.86px">pomembnejše storitve</div><div class="inp" style="left:14px;top:541px;width:189px;height:14px"></div><div class="dd" style="left:186px;top:543px"></div><div class="t" style="left:19px;top:543px;font-size:10px;color:#111">gradnja stavb</div><div class="lbl" style="top:558px;font-size:10px">poslovni subjekt</div><div class="a" style="left:90px;top:560px;width:11px;height:9px;background:#f4f4f4;border:1px solid #c0c8d8"><div class="a" style="left:3px;top:2px;width:3px;height:3px;background:#3a5f9a"></div></div><div class="inp" style="left:14px;top:569px;width:189px;height:14px"></div><div class="isci" style="left:206px;top:569px">išči</div><div class="cb" style="left:18px;top:586px"></div><div class="t" style="left:32px;top:587px;font-size:10px;color:#e6ecf4"><span class="cond" style="transform:scaleX(.817)">išči samo subjekte v območju prikaza</span></div><svg class="a" style="left:128px;top:611px" width="15" height="12" viewBox="0 0 15 12"><path d="M7 7 L3 2 L8 3Z" fill="#f08a20"/><path d="M7 7 L12 1 L13 5Z" fill="#38b848"/><path d="M7 7 L14 8 L9 11Z" fill="#c8e030"/><path d="M7 7 L2 8 L4 4Z" fill="#f0c020"/><path d="M7 7 L9 3 L11 6Z" fill="#e8e040"/></svg><div class="t" style="left:92px;top:616px;font:bold 8px/11px 'Liberation Sans';color:#f0f0f0;letter-spacing:.05px">geoprostor.net</div><div class="a" style="left:237px;top:46px;width:568px;height:384px;background:#72808f"></div><div class="t" style="left:243px;top:51px;font:bold 9px/12px 'Liberation Sans';letter-spacing:.62px;color:#111">Register prebivalcev</div><div class="a" style="left:710px;top:51px;width:64px;height:12px;border:1px solid #2a2e36;font:bold 9px/11px 'Liberation Sans';color:#22262e;text-align:center">sloji/legenda</div><div class="a" style="left:776px;top:51px;width:24px;height:12px;border:1px solid #2a2e36;font:bold 9px/11px 'Liberation Sans';color:#22262e;text-align:center">opis</div><div class="a" style="left:241px;top:68px;width:560px;height:358px;background:#ececec;border:1px solid #181c22;border-bottom-width:2px"></div><div class="a" style="left:242px;top:69px;width:1px;height:355px;background:#fff"></div><div class="a" style="left:237px;top:243px;width:0;height:0;border-top:4px solid transparent;border-bottom:4px solid transparent;border-right:3px solid #fff"></div><div class="a" style="left:802px;top:243px;width:0;height:0;border-top:4px solid transparent;border-bottom:4px solid transparent;border-left:3px solid #fff"></div><div class="a" style="left:515px;top:63px;width:0;height:0;border-left:5px solid transparent;border-right:5px solid transparent;border-bottom:4px solid #fff"></div><div class="a" style="left:515px;top:427px;width:0;height:0;border-left:5px solid transparent;border-right:5px solid transparent;border-top:4px solid #fff"></div><svg class="a" style="left:237px;top:63.5px" width="6" height="6"><path d="M0 6 L6 0 L0 0Z" fill="#fff"/></svg><svg class="a" style="left:799px;top:62px" width="6" height="6"><path d="M0 0 L6 6 L6 0Z" fill="#fff"/></svg><svg class="a" style="left:237px;top:425px" width="6" height="6"><path d="M0 0 L6 6 L0 6Z" fill="#fff"/></svg><svg class="a" style="left:799px;top:424px" width="6" height="6"><path d="M0 6 L6 0 L6 6Z" fill="#fff"/></svg><div class="t" style="left:245px;top:432px;font-size:10.8px;color:#eef2f8">0</div><div class="a" style="left:255px;top:436px;width:98px;height:4px;border:1px solid #dfe6f0;border-radius:2px;background:#4a78ac"></div><div class="a" style="left:346px;top:433px;width:3px;height:10px;background:#f4f6fa"></div><div class="t" style="left:358px;top:432px;font-size:10.8px;color:#eef2f8">5.2 km (1: <u>177996</u> )</div><div class="t" style="left:637px;top:432px;font-size:10.8px;color:#eef2f8">y=477415.2</div><div class="t" style="left:711px;top:432px;font-size:10.8px;color:#eef2f8">x=126621.4</div><div class="t" style="left:781px;top:432px;font-size:10.8px;color:#eef2f8"><u>D48</u></div><svg class="a" style="left:358px;top:69px" width="326" height="355" viewBox="358 69 326 355"><rect x="358" y="69" width="326" height="356" fill="#fdfdfd"/><path d="M358 69 L435 69 L433 73 L419 79 L407 83 L391 88 L375 89 L358 87Z" fill="#dfead2"/><path d="M358 87 L375 89 L391 88 L407 83 L419 79 L433 73 L435 69" fill="none" stroke="#b8c8a8" stroke-width="1"/><path d="M445 95 Q470 80 500 88 T560 85 T620 95 T684 90" fill="none" stroke="#d8d8d8" stroke-width="1"/><path d="M470 100 Q520 95 560 110 T640 120 T684 110" fill="none" stroke="#d8d8d8" stroke-width="1"/><path d="M600 80 Q630 72 660 80 T684 78" fill="none" stroke="#d8d8d8" stroke-width="1"/><path d="M640 150 Q650 180 670 200 T684 240" fill="none" stroke="#d8d8d8" stroke-width="1"/><path d="M620 260 Q650 250 684 270" fill="none" stroke="#d8d8d8" stroke-width="1"/><path d="M560 340 Q600 360 640 350 T684 330" fill="none" stroke="#d8d8d8" stroke-width="1"/><path d="M590 300 Q620 320 660 300 T684 290" fill="none" stroke="#d8d8d8" stroke-width="1"/><path d="M600 380 Q640 400 684 400" fill="none" stroke="#d8d8d8" stroke-width="1"/><path d="M520 390 Q560 395 590 410 T640 420" fill="none" stroke="#d8d8d8" stroke-width="1"/><path d="M370 195 Q380 230 375 260" fill="none" stroke="#d8d8d8" stroke-width="1"/><path d="M360 300 Q380 330 375 380" fill="none" stroke="#d8d8d8" stroke-width="1"/><path d="M580 395 Q600 390 615 405" fill="none" stroke="#d8d8d8" stroke-width="1"/><path d="M440 120 Q470 130 505 130 Q520 140 525 170 Q530 200 545 210" fill="none" stroke="#b8d8ec" stroke-width="1.2"/><path d="M470 235 Q520 250 560 260 T600 270" fill="none" stroke="#b8d8ec" stroke-width="1.2"/><path d="M640 110 Q650 140 660 160" fill="none" stroke="#b8d8ec" stroke-width="1.2"/><path d="M600 420 Q640 405 684 410" fill="none" stroke="#b8d8ec" stroke-width="1.2"/><path d="M420 318 Q450 330 470 330 Q500 332 520 320" fill="none" stroke="#b8d8ec" stroke-width="1.2"/><path d="M359 112 L375 106 L385 103 L395 111 L403 97 L415 101 L421 89 L431 93 L439 87 L447 95 L459 100 L471 98 L479 95 L495 91 L503 85 L525 85 L545 88" fill="none" stroke="#f1e0b8" stroke-width="2.5" stroke-linejoin="round"/><path d="M471 98 L475 113 L470 121 L475 129" fill="none" stroke="#f1e0b8" stroke-width="2.5" stroke-linejoin="round"/><path d="M401 132 L395 149 L385 165 L381 175 L372 195 L365 210 L359 215" fill="none" stroke="#f1e0b8" stroke-width="2.5" stroke-linejoin="round"/><path d="M359 380 L362 400 L366 424" fill="none" stroke="#f1e0b8" stroke-width="2.5" stroke-linejoin="round"/><path d="M647 376.7 L667.8 387 L684 395" fill="none" stroke="#f1e0b8" stroke-width="2.5" stroke-linejoin="round"/><path d="M359 116 L373 125 L379 129 L401 132 L421 119 L435 121 L449 127 L465 131 L475 130 L485 135 L495 165 L499 175 L505 195 L513 202" fill="none" stroke="#f2d4c0" stroke-width="2.5" stroke-linejoin="round"/><path d="M587 424 L601.5 405.7 L622.2 393.3 L638.8 385 L659.5 376.7 L676 364.3 L684 356" fill="none" stroke="#f2d4c0" stroke-width="2.5" stroke-linejoin="round"/><path d="M626 231 L646 271 L676.8 289.6 L684 298" fill="none" stroke="#f2d4c0" stroke-width="2.5" stroke-linejoin="round"/><path d="M369 121 L377 117 L379 129 L372 133Z" fill="#f0c8b4"/><circle cx="431" cy="92" r="2.5" fill="#fff" stroke="#c4c4c4" stroke-width="1"/><circle cx="482" cy="101" r="2.5" fill="#fff" stroke="#c4c4c4" stroke-width="1"/><circle cx="474.5" cy="128.7" r="3" fill="#fff" stroke="#c4c4c4" stroke-width="1"/><circle cx="400.8" cy="132" r="2.5" fill="#fff" stroke="#c4c4c4" stroke-width="1"/><circle cx="476" cy="182.3" r="2.5" fill="#fff" stroke="#c4c4c4" stroke-width="1"/><circle cx="644" cy="272.6" r="2.5" fill="#fff" stroke="#c4c4c4" stroke-width="1"/><circle cx="675" cy="289.6" r="3" fill="#fff" stroke="#c4c4c4" stroke-width="1"/><circle cx="625.7" cy="346" r="2.5" fill="#fff" stroke="#c4c4c4" stroke-width="1"/><circle cx="600" cy="369" r="2.5" fill="#fff" stroke="#c4c4c4" stroke-width="1"/><circle cx="637.6" cy="385.8" r="3" fill="#fff" stroke="#c4c4c4" stroke-width="1"/><circle cx="591.6" cy="415.7" r="3" fill="#fff" stroke="#c4c4c4" stroke-width="1"/><text x="427" y="102" font-family="Liberation Sans" font-size="8.5" fill="#bdbdbd" >Podolševa</text><text x="485" y="104" font-family="Liberation Sans" font-size="8.5" fill="#bdbdbd" >Olarje</text><text x="408" y="136" font-family="Liberation Sans" font-size="9" fill="#bdbdbd" >Logarska</text><text x="408" y="145" font-family="Liberation Sans" font-size="9" fill="#bdbdbd" >Dolina</text><text x="482" y="131" font-family="Liberation Sans" font-size="11" fill="#b4b4b4" >Solčava</text><text x="459" y="172" font-family="Liberation Sans" font-size="8.5" fill="#bdbdbd" >Robanov</text><text x="460" y="182" font-family="Liberation Sans" font-size="8.5" fill="#bdbdbd" >Kot</text><text x="500" y="168" font-family="Liberation Sans" font-size="12" fill="#bababa" font-style="italic">V. Ra</text><text x="436" y="84" font-family="Liberation Sans" font-size="9" fill="#c4c4c4" font-style="italic">O    L    Š    E    V    A</text><text x="422" y="221" font-family="Liberation Sans" font-size="14" fill="#c8c8c8" >S</text><text x="455" y="214" font-family="Liberation Sans" font-size="14" fill="#c8c8c8" >K</text><text x="492" y="207" font-family="Liberation Sans" font-size="14" fill="#c8c8c8" >E</text><text x="364" y="236" font-family="Liberation Sans" font-size="9" fill="#c4c4c4" letter-spacing="1" transform="rotate(-63 364 236)">LOGARSKA DOLINA</text><text x="378" y="315" font-family="Liberation Sans" font-size="10" fill="#c4c4c4" letter-spacing="1.8" transform="rotate(51 377 314)">VELIKA PLANINA</text><text x="607" y="341" font-family="Liberation Sans" font-size="10" fill="#bdbdbd" >Florjan</text><text x="651" y="326" font-family="Liberation Sans" font-size="10" fill="#bdbdbd" >Radmirje</text><text x="614" y="381" font-family="Liberation Sans" font-size="10" fill="#bdbdbd" >GORNJI GRAD</text><text x="581" y="411" font-family="Liberation Sans" font-size="10" fill="#bdbdbd" >Dol</text><text x="610" y="406" font-family="Liberation Sans" font-size="9" fill="#a8d0e8" font-style="italic">Dreta</text><text x="616" y="268" font-family="Liberation Sans" font-size="10" fill="#bdbdbd" >Savina</text><text x="636" y="77" font-family="Liberation Sans" font-size="8.5" fill="#bdbdbd" >Bistra</text><text x="574" y="373" font-family="Liberation Sans" font-size="8" fill="#bdbdbd" >Lenart</text><text x="389" y="238" font-family="Liberation Sans" font-size="8" fill="#bdbdbd" >2350</text><text x="361" y="265" font-family="Liberation Sans" font-size="8" fill="#bdbdbd" >1594</text><text x="386" y="380" font-family="Liberation Sans" font-size="8" fill="#bdbdbd" >1567</text><text x="500" y="402" font-family="Liberation Sans" font-size="8" fill="#bdbdbd" >1455</text><text x="539" y="364" font-family="Liberation Sans" font-size="8" fill="#bdbdbd" >1425</text><text x="500" y="148" font-family="Liberation Sans" font-size="8" fill="#bdbdbd" >2062</text><text x="583" y="250" font-family="Liberation Sans" font-size="8" fill="#7ab4dc" font-style="italic" transform="rotate(-22 583 250)">Savinja</text><text x="427" y="113" font-family="Liberation Sans" font-size="8" fill="#88bce0" font-style="italic" transform="rotate(25 427 113)">Savinja</text><path d="M404 322 Q420 336 440 334 Q455 330 470 327 Q480 320 486 304 Q489 298 494 296" stroke="#777" stroke-width="0.8" fill="none"/><path d="M470 332 Q490 342 505 338 Q520 336 528 340" stroke="#777" stroke-width="0.8" fill="none"/><path d="M540 262 Q548 276 552 284 Q556 292 560 300" stroke="#777" stroke-width="0.8" fill="none"/><path d="M404 300 Q412 318 430 328 Q450 336 480 338 Q500 342 520 346" stroke="#8cc4e4" stroke-width="0.9" fill="none" stroke-dasharray="3 1.5"/><path d="M560 300 Q566 320 560 340 Q555 360 540 372" stroke="#8cc4e4" stroke-width="0.9" fill="none" stroke-dasharray="3 1.5"/><polygon points="588.8,103.6 594.5,111 599.5,113.5 607.7,110.2 614.3,116.8 622.5,121.7 632.4,124.2 637.3,127.4 637.3,142.3 635.7,150 630.9,154.8 634.1,162.8 642.1,177.1 646.1,182.7 643.7,191.5 635.7,202.6 629.3,209 622.9,217 621.3,226.6 615,234.5 616.6,245.7 611.2,255 603,268.6 600.3,282.2 596.3,295.8 592.2,303.9 581.4,314.7 575.9,325.6 566.7,330 565,339.9 555.1,341.5 542,344.8 538.7,353 527.2,354.7 519,359.6 517.3,372.8 512.4,379.3 499.2,379.3 497.6,389.2 495.9,400.7 489.4,407.3 469.6,410.6 456.5,413.9 446.6,409 448.2,400.7 451.5,387.6 449.9,371.1 448.2,356.3 442.5,348 431.5,346 423.2,341.9 410.7,331.5 402.4,321.1 396.2,310.7 398.3,304.5 397.3,290 396.5,260 397,243.5 404,247 412.8,250.5 436.5,250.5 447.9,239.1 460.2,226.8 467.2,221.6 476,211.9 486.5,221.6 498.8,211.9 500,210.8 507.7,206 512.4,200.8 519.1,203.7 532.5,203.2 543.1,193.6 544,188.8 542.2,184.3 537.4,178.3 535,171.1 532.6,163.9 529,160.3 532.6,156.7 537.4,150.8 544.6,144.8 548,140.9 562,131.2 572.6,125 576,112.8 579.6,107.5" fill="none" stroke="#6e6b5a" stroke-width="3" stroke-linejoin="round"/><polyline points="607.7,112.6 601.1,122.5 599.5,134 602,146 600.6,158 594.2,172.3 592.6,180.3 595.8,188.3 600.6,199.4 601.4,207.4 599,217 595,231.3 591,239.3" fill="none" stroke="#f2c61c" stroke-width="2.6" stroke-linejoin="round" stroke-linecap="round"/><polyline points="536.2,154.4 548,170.7 551.2,181.9 557.5,187.5 567.1,189.9 571.9,197.8 575.9,207.4 578.3,217 581.5,228.1 586.3,236.1 591,239.3" fill="none" stroke="#f2c61c" stroke-width="2.6" stroke-linejoin="round" stroke-linecap="round"/><polyline points="512.4,202.7 522,207 526.8,213.7 534.4,222.3 533.5,227.1 528.7,232.8 528.7,238.6 531.6,245 535.2,247.7 539.4,255" fill="none" stroke="#f2c61c" stroke-width="2.6" stroke-linejoin="round" stroke-linecap="round"/><polyline points="539.4,255 544.7,256 552,258.5 554.2,261.4 552,265 544.7,266.5 539.4,265.7 537,261 539.4,255" fill="none" stroke="#f2c61c" stroke-width="2.6" stroke-linejoin="round" stroke-linecap="round"/><polyline points="554.2,261.4 563.7,256.2 574.3,245.6 585,243.5 591,239.3 599,236.9 611.8,234.5 616,233.5" fill="none" stroke="#f2c61c" stroke-width="2.6" stroke-linejoin="round" stroke-linecap="round"/><polyline points="539.4,265.7 536.9,270 530.2,278.9 526.9,285.6 528,292.3 522.4,300.1 517.9,309 511.2,316.9 505.7,325.8 499,325.8 492.3,314.6 488.9,310.2 480,318 468.7,323.8 448.4,326.2 449.6,338 440,340.5 436,346" fill="none" stroke="#f2c61c" stroke-width="2.6" stroke-linejoin="round" stroke-linecap="round"/><polyline points="526.9,300.1 538,306.8 543.6,315.7 536.9,323.6 530.2,332.5 531.3,340 533.2,344.1 540.4,346.5" fill="none" stroke="#f2c61c" stroke-width="2.6" stroke-linejoin="round" stroke-linecap="round"/><polyline points="490,352 487.8,365.6 484.2,382.4 480.6,394.3 475.9,403.9 468.7,408.7 464,412" fill="none" stroke="#f2c61c" stroke-width="2.6" stroke-linejoin="round" stroke-linecap="round"/><path d="M575 157 L580 166 M603 158 L606 167 L612 164" stroke="#222" stroke-width="1.2" fill="none"/><path d="M593 121 Q597 126 601 124 Q604 128 603 133" stroke="#6a5a5a" stroke-width="0.9" fill="none" stroke-dasharray="2 1"/><path d="M596 130 Q601 134 606 131 Q611 136 616 134 Q621 131 626 134 Q630 132 634 137" stroke="#6a5a5a" stroke-width="0.9" fill="none" stroke-dasharray="2 1"/><path d="M598 136 Q603 139 608 137 Q612 141 618 139 Q622 143 628 141" stroke="#6a5a5a" stroke-width="0.9" fill="none" stroke-dasharray="2 1"/><path d="M603 141 Q608 144 611 142 Q615 146 620 145" stroke="#6a5a5a" stroke-width="0.9" fill="none" stroke-dasharray="2 1"/><path d="M622 128 Q626 124 630 129" stroke="#6a5a5a" stroke-width="0.9" fill="none" stroke-dasharray="2 1"/><path d="M607 126 Q612 128 611 133" stroke="#6a5a5a" stroke-width="0.9" fill="none" stroke-dasharray="2 1"/><rect x="566.0" y="148.1" width="7" height="7" fill="#d2d2d2"/><rect x="580.4" y="165.6" width="7" height="7" fill="#d2d2d2"/><rect x="573.2" y="178.4" width="7" height="7" fill="#d2d2d2"/><rect x="568.4" y="175.2" width="7" height="7" fill="#d2d2d2"/><rect x="546.9" y="184.0" width="7" height="7" fill="#d2d2d2"/><rect x="562.8" y="183.2" width="7" height="7" fill="#d2d2d2"/><rect x="541.3" y="203.1" width="7" height="7" fill="#d2d2d2"/><rect x="624.2" y="205.5" width="7" height="7" fill="#d2d2d2"/><rect x="568.4" y="216.7" width="7" height="7" fill="#d2d2d2"/><rect x="608.3" y="213.5" width="7" height="7" fill="#d2d2d2"/><rect x="568.4" y="240.6" width="7" height="7" fill="#d2d2d2"/><rect x="547.2" y="184.4" width="7" height="7" fill="#d2d2d2"/><rect x="543.4" y="203.5" width="7" height="7" fill="#d2d2d2"/><rect x="533.8" y="206.4" width="7" height="7" fill="#d2d2d2"/><rect x="569.2" y="215.0" width="7" height="7" fill="#d2d2d2"/><rect x="512.7" y="255.8" width="7" height="7" fill="#d2d2d2"/><rect x="522.2" y="253.7" width="7" height="7" fill="#d2d2d2"/><rect x="540.1" y="256.9" width="7" height="7" fill="#d2d2d2"/><rect x="555.0" y="252.7" width="7" height="7" fill="#d2d2d2"/><rect x="511.6" y="265.3" width="7" height="7" fill="#d2d2d2"/><rect x="546.5" y="264.3" width="7" height="7" fill="#d2d2d2"/><rect x="513.7" y="275.9" width="7" height="7" fill="#d2d2d2"/><rect x="514.8" y="280.1" width="7" height="7" fill="#d2d2d2"/><rect x="571.9" y="240.0" width="7" height="7" fill="#d2d2d2"/><rect x="575.3" y="276.0" width="7" height="7" fill="#d2d2d2"/><rect x="573.7" y="252.9" width="7" height="7" fill="#d2d2d2"/><rect x="542.5" y="256.2" width="7" height="7" fill="#d2d2d2"/><rect x="538.3" y="294.1" width="7" height="7" fill="#d2d2d2"/><rect x="513.3" y="273.2" width="7" height="7" fill="#d2d2d2"/><rect x="515.0" y="278.8" width="7" height="7" fill="#d2d2d2"/><rect x="511.1" y="298.9" width="7" height="7" fill="#d2d2d2"/><rect x="510.0" y="303.3" width="7" height="7" fill="#d2d2d2"/><rect x="539.0" y="293.3" width="7" height="7" fill="#d2d2d2"/><rect x="520.0" y="308.9" width="7" height="7" fill="#d2d2d2"/><rect x="502.2" y="316.7" width="7" height="7" fill="#d2d2d2"/><rect x="511.1" y="316.7" width="7" height="7" fill="#d2d2d2"/><rect x="485.4" y="329.0" width="7" height="7" fill="#d2d2d2"/><rect x="554.5" y="329.0" width="7" height="7" fill="#d2d2d2"/><rect x="444.9" y="295.2" width="7" height="7" fill="#d2d2d2"/><rect x="474.7" y="304.7" width="7" height="7" fill="#d2d2d2"/><rect x="486.7" y="322.7" width="7" height="7" fill="#d2d2d2"/><rect x="484.3" y="334.6" width="7" height="7" fill="#d2d2d2"/><rect x="477.1" y="350.2" width="7" height="7" fill="#d2d2d2"/><rect x="484.3" y="351.4" width="7" height="7" fill="#d2d2d2"/><rect x="472.4" y="366.9" width="7" height="7" fill="#d2d2d2"/><rect x="472.4" y="378.9" width="7" height="7" fill="#d2d2d2"/><rect x="471.2" y="388.4" width="7" height="7" fill="#d2d2d2"/><rect x="544.1" y="273.7" width="7" height="7" fill="#d2d2d2"/><rect x="476.0" y="235.5" width="7" height="7" fill="#d2d2d2"/><rect x="605.9" y="165.6" width="7" height="7" fill="#3fd4cc"/><rect x="619.4" y="175.2" width="7" height="7" fill="#3fd4cc"/><rect x="578.0" y="187.2" width="7" height="7" fill="#3fd4cc"/><rect x="618.6" y="192.0" width="7" height="7" fill="#3fd4cc"/><rect x="625.8" y="189.6" width="7" height="7" fill="#3fd4cc"/><rect x="629.0" y="197.5" width="7" height="7" fill="#3fd4cc"/><rect x="579.6" y="199.1" width="7" height="7" fill="#3fd4cc"/><rect x="587.5" y="200.7" width="7" height="7" fill="#3fd4cc"/><rect x="609.9" y="207.1" width="7" height="7" fill="#3fd4cc"/><rect x="614.6" y="202.3" width="7" height="7" fill="#3fd4cc"/><rect x="564.4" y="209.5" width="7" height="7" fill="#3fd4cc"/><rect x="558.8" y="216.7" width="7" height="7" fill="#3fd4cc"/><rect x="584.3" y="211.9" width="7" height="7" fill="#3fd4cc"/><rect x="596.3" y="210.3" width="7" height="7" fill="#3fd4cc"/><rect x="614.6" y="211.9" width="7" height="7" fill="#3fd4cc"/><rect x="584.3" y="221.5" width="7" height="7" fill="#3fd4cc"/><rect x="600.3" y="223.1" width="7" height="7" fill="#3fd4cc"/><rect x="550.1" y="232.6" width="7" height="7" fill="#3fd4cc"/><rect x="574.0" y="230.2" width="7" height="7" fill="#3fd4cc"/><rect x="608.3" y="229.4" width="7" height="7" fill="#3fd4cc"/><rect x="603.5" y="237.4" width="7" height="7" fill="#3fd4cc"/><rect x="573.2" y="237.4" width="7" height="7" fill="#3fd4cc"/><rect x="564.5" y="209.3" width="7" height="7" fill="#3fd4cc"/><rect x="557.7" y="217.9" width="7" height="7" fill="#3fd4cc"/><rect x="532.9" y="217.9" width="7" height="7" fill="#3fd4cc"/><rect x="514.7" y="228.9" width="7" height="7" fill="#3fd4cc"/><rect x="550.1" y="233.2" width="7" height="7" fill="#3fd4cc"/><rect x="573.1" y="231.3" width="7" height="7" fill="#3fd4cc"/><rect x="533.8" y="238.9" width="7" height="7" fill="#3fd4cc"/><rect x="533.8" y="241.0" width="7" height="7" fill="#3fd4cc"/><rect x="550.7" y="233.6" width="7" height="7" fill="#3fd4cc"/><rect x="571.9" y="234.7" width="7" height="7" fill="#3fd4cc"/><rect x="557.1" y="263.2" width="7" height="7" fill="#3fd4cc"/><rect x="533.8" y="285.4" width="7" height="7" fill="#3fd4cc"/><rect x="507.4" y="283.3" width="7" height="7" fill="#3fd4cc"/><rect x="515.8" y="286.5" width="7" height="7" fill="#3fd4cc"/><rect x="567.6" y="275.9" width="7" height="7" fill="#3fd4cc"/><rect x="571.9" y="282.3" width="7" height="7" fill="#3fd4cc"/><rect x="576.1" y="285.4" width="7" height="7" fill="#3fd4cc"/><rect x="580.3" y="260.1" width="7" height="7" fill="#3fd4cc"/><rect x="567.1" y="274.3" width="7" height="7" fill="#3fd4cc"/><rect x="575.3" y="284.2" width="7" height="7" fill="#3fd4cc"/><rect x="588.5" y="287.5" width="7" height="7" fill="#3fd4cc"/><rect x="562.2" y="308.9" width="7" height="7" fill="#3fd4cc"/><rect x="562.2" y="313.8" width="7" height="7" fill="#3fd4cc"/><rect x="598.4" y="254.5" width="7" height="7" fill="#3fd4cc"/><rect x="604.9" y="238.1" width="7" height="7" fill="#3fd4cc"/><rect x="572.0" y="257.9" width="7" height="7" fill="#3fd4cc"/><rect x="507.7" y="283.8" width="7" height="7" fill="#3fd4cc"/><rect x="516.1" y="287.1" width="7" height="7" fill="#3fd4cc"/><rect x="533.4" y="284.9" width="7" height="7" fill="#3fd4cc"/><rect x="531.2" y="293.3" width="7" height="7" fill="#3fd4cc"/><rect x="501.0" y="311.1" width="7" height="7" fill="#3fd4cc"/><rect x="493.2" y="324.5" width="7" height="7" fill="#3fd4cc"/><rect x="491.0" y="331.2" width="7" height="7" fill="#3fd4cc"/><rect x="493.9" y="326.3" width="7" height="7" fill="#3fd4cc"/><rect x="491.5" y="332.2" width="7" height="7" fill="#3fd4cc"/><rect x="490.3" y="337.0" width="7" height="7" fill="#3fd4cc"/><rect x="479.5" y="343.0" width="7" height="7" fill="#3fd4cc"/><rect x="484.3" y="343.0" width="7" height="7" fill="#3fd4cc"/><rect x="464.0" y="370.5" width="7" height="7" fill="#3fd4cc"/><rect x="478.3" y="372.9" width="7" height="7" fill="#3fd4cc"/><rect x="470.0" y="375.3" width="7" height="7" fill="#3fd4cc"/><rect x="592.5" y="194.5" width="7" height="7" fill="#3fd4cc"/><rect x="596.5" y="216.5" width="7" height="7" fill="#3fd4cc"/><rect x="541.5" y="239.5" width="7" height="7" fill="#3fd4cc"/><rect x="601.9" y="176.0" width="7" height="7" fill="#24a53c"/><rect x="573.2" y="191.2" width="7" height="7" fill="#24a53c"/><rect x="583.5" y="186.4" width="7" height="7" fill="#24a53c"/><rect x="603.5" y="194.3" width="7" height="7" fill="#24a53c"/><rect x="637.0" y="188.8" width="7" height="7" fill="#24a53c"/><rect x="538.1" y="201.5" width="7" height="7" fill="#24a53c"/><rect x="551.7" y="224.6" width="7" height="7" fill="#24a53c"/><rect x="560.4" y="234.2" width="7" height="7" fill="#24a53c"/><rect x="588.3" y="227.0" width="7" height="7" fill="#24a53c"/><rect x="596.3" y="229.4" width="7" height="7" fill="#24a53c"/><rect x="573.1" y="191.1" width="7" height="7" fill="#24a53c"/><rect x="539.6" y="202.1" width="7" height="7" fill="#24a53c"/><rect x="552.0" y="225.5" width="7" height="7" fill="#24a53c"/><rect x="559.7" y="233.2" width="7" height="7" fill="#24a53c"/><rect x="559.2" y="247.4" width="7" height="7" fill="#24a53c"/><rect x="560.2" y="233.6" width="7" height="7" fill="#24a53c"/><rect x="528.0" y="255.8" width="7" height="7" fill="#24a53c"/><rect x="527.5" y="268.5" width="7" height="7" fill="#24a53c"/><rect x="537.0" y="277.0" width="7" height="7" fill="#24a53c"/><rect x="559.2" y="295.0" width="7" height="7" fill="#24a53c"/><rect x="558.9" y="295.7" width="7" height="7" fill="#24a53c"/><rect x="558.9" y="300.7" width="7" height="7" fill="#24a53c"/><rect x="558.9" y="246.4" width="7" height="7" fill="#24a53c"/><rect x="536.8" y="276.5" width="7" height="7" fill="#24a53c"/><rect x="508.9" y="308.3" width="7" height="7" fill="#24a53c"/><rect x="497.1" y="316.2" width="7" height="7" fill="#24a53c"/><rect x="490.3" y="350.2" width="7" height="7" fill="#24a53c"/><rect x="460.4" y="399.2" width="7" height="7" fill="#24a53c"/><rect x="560.4" y="190.4" width="7" height="7" fill="#5fe26a"/><rect x="586.7" y="192.0" width="7" height="7" fill="#5fe26a"/><rect x="621.0" y="196.7" width="7" height="7" fill="#5fe26a"/><rect x="579.6" y="219.1" width="7" height="7" fill="#5fe26a"/><rect x="568.4" y="231.0" width="7" height="7" fill="#5fe26a"/><rect x="550.9" y="243.8" width="7" height="7" fill="#5fe26a"/><rect x="559.7" y="190.1" width="7" height="7" fill="#5fe26a"/><rect x="568.3" y="231.3" width="7" height="7" fill="#5fe26a"/><rect x="525.2" y="239.9" width="7" height="7" fill="#5fe26a"/><rect x="549.7" y="246.3" width="7" height="7" fill="#5fe26a"/><rect x="524.3" y="266.4" width="7" height="7" fill="#5fe26a"/><rect x="581.9" y="259.5" width="7" height="7" fill="#5fe26a"/><rect x="506.6" y="296.6" width="7" height="7" fill="#5fe26a"/><rect x="524.5" y="268.2" width="7" height="7" fill="#5fe26a"/><rect x="484.3" y="362.1" width="7" height="7" fill="#5fe26a"/><rect x="569.2" y="185.6" width="7" height="7" fill="#1f72e4"/><rect x="601.9" y="188.8" width="7" height="7" fill="#1f72e4"/><rect x="630.6" y="187.2" width="7" height="7" fill="#1f72e4"/><rect x="564.4" y="198.3" width="7" height="7" fill="#1f72e4"/><rect x="554.0" y="212.7" width="7" height="7" fill="#1f72e4"/><rect x="613.9" y="220.7" width="7" height="7" fill="#1f72e4"/><rect x="578.0" y="243.8" width="7" height="7" fill="#1f72e4"/><rect x="569.2" y="185.3" width="7" height="7" fill="#1f72e4"/><rect x="564.5" y="197.8" width="7" height="7" fill="#1f72e4"/><rect x="553.9" y="213.1" width="7" height="7" fill="#1f72e4"/><rect x="564.5" y="229.3" width="7" height="7" fill="#1f72e4"/><rect x="521.4" y="238.9" width="7" height="7" fill="#1f72e4"/><rect x="521.1" y="238.4" width="7" height="7" fill="#1f72e4"/><rect x="563.4" y="259.0" width="7" height="7" fill="#1f72e4"/><rect x="553.9" y="266.4" width="7" height="7" fill="#1f72e4"/><rect x="577.2" y="247.4" width="7" height="7" fill="#1f72e4"/><rect x="578.2" y="266.4" width="7" height="7" fill="#1f72e4"/><rect x="569.8" y="295.0" width="7" height="7" fill="#1f72e4"/><rect x="578.6" y="246.4" width="7" height="7" fill="#1f72e4"/><rect x="586.8" y="256.2" width="7" height="7" fill="#1f72e4"/><rect x="578.6" y="266.9" width="7" height="7" fill="#1f72e4"/><rect x="570.5" y="295.7" width="7" height="7" fill="#1f72e4"/><rect x="563.0" y="257.9" width="7" height="7" fill="#1f72e4"/><rect x="549.0" y="266.1" width="7" height="7" fill="#1f72e4"/><rect x="524.5" y="307.2" width="7" height="7" fill="#1f72e4"/><rect x="475.9" y="310.7" width="7" height="7" fill="#1f72e4"/><rect x="473.5" y="362.1" width="7" height="7" fill="#1f72e4"/><text x="532" y="168" font-family="Liberation Sans" font-size="12" fill="#3c3c48" >duha</text><text x="545" y="233" font-family="Liberation Sans" font-size="11" fill="#333" >Raduha</text><text x="519" y="265" font-family="Liberation Sans" font-size="11" fill="#333" >Lu</text><text x="480" y="278" font-family="Liberation Sans" font-size="10" fill="#444" >Podveža</text><text x="561" y="293" font-family="Liberation Sans" font-size="11" fill="#333" >Krnice</text><text x="431" y="354" font-family="Liberation Sans" font-size="11" fill="#333" >Podolovljek</text><text x="432" y="264" font-family="Liberation Sans" font-size="8.5" fill="#333" font-style="italic">2110</text><text x="421" y="273" font-family="Liberation Sans" font-size="8.5" fill="#333" font-style="italic">Veliko vrh</text><text x="431" y="238" font-family="Liberation Sans" font-size="8.5" fill="#444" font-style="italic">Molička peč</text><text x="447" y="247" font-family="Liberation Sans" font-size="8.5" fill="#333" font-style="italic">2028</text><text x="532" y="315" font-family="Liberation Sans" font-size="8" fill="#333" font-style="italic">1557</text><text x="528" y="325" font-family="Liberation Sans" font-size="8" fill="#333" font-style="italic">Jezgore</text><text x="590" y="273" font-family="Liberation Sans" font-size="8" fill="#555" font-style="italic">Krnica</text></svg><div class="a" style="left:358px;top:69px;width:1px;height:355px;background:repeating-linear-gradient(#9c9c9c 0 1px,#e4e4e4 1px 3px)"></div><div class="a" style="left:683px;top:69px;width:1px;height:355px;background:repeating-linear-gradient(#9c9c9c 0 1px,#e4e4e4 1px 3px)"></div><div class="t" style="left:742px;top:72px;width:54px;height:9px;background:#5a5a5a;color:#fff;font:bold 8px/9px 'Liberation Sans';text-align:center;letter-spacing:.1px">© PISO-LUČE</div><div class="t" style="left:637px;top:414px;width:157px;height:9px;overflow:hidden;background:#5a5a5a;color:#fff;font:8.5px/9.5px 'Liberation Sans';padding-left:1px;letter-spacing:-.05px"><span class="cond" style="transform:scaleX(.945)">05.09.2013 09:33:39, ewmap, www.realis.si</span></div><svg class="a" style="left:805px;top:40px" width="46" height="420" viewBox="805 40 46 420"><rect x="820" y="50.5" width="16" height="19.5" fill="none" stroke="#f4f6fa" stroke-width="2"/><path d="M823 66 Q822 60 825 56 Q827 53 830 54 L832 52 Q834 56 833 60 Q830 62 831 65 L833 67 Q828 68 826 66" fill="none" stroke="#dfe6ef" stroke-width="1" stroke-dasharray="1.5 1"/><path d="M823 63 V68 M820.5 65.5 H825.5" stroke="#fff" stroke-width="1.5"/><path d="M819.5 88 L827 80.5 V84.5 H837.5 V91.5 H827 V95.5 Z" fill="none" stroke="#f6f8fb" stroke-width="2" stroke-linejoin="miter"/><path d="M837.5 116 L830 108.5 V112.5 H819.5 V119.5 H830 V123.5 Z" fill="none" stroke="#b4bcc6" stroke-width="2" stroke-linejoin="miter"/><rect x="815" y="131" width="25" height="25" fill="#2b5a8f" stroke="#3d6ea6" stroke-width="1"/><circle cx="826" cy="141.5" r="5.5" fill="none" stroke="#fff" stroke-width="2.2"/><path d="M830 146 L836 153" stroke="#fff" stroke-width="2.6" stroke-linecap="round"/><path d="M823.2 141.5 H828.8 M826 138.7 V144.3" stroke="#fff" stroke-width="1.6"/><circle cx="826" cy="169.5" r="5.5" fill="none" stroke="#fff" stroke-width="2.2"/><path d="M830 174 L836 181" stroke="#fff" stroke-width="2.6" stroke-linecap="round"/><path d="M824 169.5 H828" stroke="#fff" stroke-width="1.6"/><path d="M828 191 V209 M819 200 H837" stroke="#fff" stroke-width="2"/><path d="M828 189.5 L824 194 H832Z M828 210.5 L824 206 H832Z M818 200 L822.5 196 V204Z M838.5 200 L834 196 V204Z" fill="#fff"/><text x="823" y="236.5" font-family="Liberation Serif" font-style="italic" font-weight="bold" font-size="20" fill="#fff">i</text><text x="823" y="264" font-family="Liberation Serif" font-style="italic" font-weight="bold" font-size="20" fill="#9aa4b0">i</text><text x="830" y="266" font-family="Liberation Serif" font-style="italic" font-size="9" fill="#9aa4b0">g</text><path d="M819 277.5 Q818.5 290.5 832.5 291.5 Z" fill="#fff" stroke="#fff" stroke-width="1" stroke-linejoin="round"/><path d="M823.5 288.5 L820.5 295 H830 L827.5 288.5Z" fill="#fff"/><path d="M825.5 284.5 L829 281" stroke="#fff" stroke-width="1.3"/><path d="M827 281 A4 4 0 0 1 831 285" fill="none" stroke="#fff" stroke-width="1.6"/><path d="M827 277.5 A7.5 7.5 0 0 1 834.5 285" fill="none" stroke="#fff" stroke-width="1.6"/><path d="M827 274 A11 11 0 0 1 838 285" fill="none" stroke="#fff" stroke-width="1.6"/><path d="M822 336 V327 H832 L835 330 V336" fill="#2f6196" stroke="#fff" stroke-width="1.3"/><path d="M824 330 H829 M824 332.5 H832" stroke="#fff" stroke-width="1"/><rect x="816.5" y="336" width="23" height="6" rx="1.5" fill="#2f6196" stroke="#fff" stroke-width="1.3"/><rect x="819" y="342" width="18" height="4" fill="#2f6196" stroke="#fff" stroke-width="1.2"/><rect x="817.5" y="337.5" width="21" height="2" fill="#fff" opacity=".6"/><path d="M818 359 L822 355 H838 V369 L834 373 H818Z M818 359 H834 V373 M834 359 L838 355" fill="none" stroke="#fff" stroke-width="1.2"/><text x="819" y="370.5" font-family="Liberation Sans" font-weight="bold" font-size="10.5" fill="#fff" letter-spacing="-.5">3D</text><rect x="818.5" y="385.5" width="19" height="13" fill="none" stroke="#fff" stroke-width="1.4"/><path d="M818.5 386 L828 393 L837.5 386" fill="none" stroke="#fff" stroke-width="1.4"/><path d="M819 441 V452 M838 441 V452 M820 446.5 H837" stroke="#fff" stroke-width="1.6"/><path d="M820 446.5 L825 443.5 V449.5Z M837 446.5 L832 443.5 V449.5Z" fill="#fff"/><text x="824" y="442" font-family="Liberation Sans" font-weight="bold" font-size="9" fill="#fff">m</text></svg><div class="a" style="left:238px;top:446px;width:567px;height:167px;background:linear-gradient(#7c8798,#8a98ab)"></div><div class="a" style="left:242px;top:450px;width:558px;height:158px;background:#cbcbcb"></div><div class="a" style="left:471px;top:446px;width:101px;height:5px;background:#ecece4"></div><div class="a" style="left:482px;top:447px;width:80px;height:0;border-top:1px dotted #555"></div><div class="a" style="left:475px;top:447px;width:0;height:0;border-left:3px solid transparent;border-right:3px solid transparent;border-bottom:3px solid #111"></div><div class="a" style="left:564px;top:447px;width:0;height:0;border-left:3px solid transparent;border-right:3px solid transparent;border-bottom:3px solid #111"></div><div class="t" style="left:246px;top:454.5px;font:bold 9px/12px 'Liberation Sans';letter-spacing:.66px;color:#111">Register prebivalcev - iskanje</div><div class="a" style="left:245px;top:466px;width:539px;height:1px;background:#222"></div><div class="a" style="left:245px;top:467px;width:539px;height:1px;background:#eee"></div><div class="it" style="left:246px;top:482px;font-size:9.74px;letter-spacing:.1px">PRIIMEK IN IME:</div><div class="it" style="left:246px;top:499px;font-size:9.7px;letter-spacing:.1px">NASELJE,UL.,HIŠ.ŠT.:</div><div class="it" style="left:246px;top:515px;font-size:9.25px;letter-spacing:.1px">EMŠO, SPOL, STATUS:</div><div class="it" style="left:246px;top:531px;font-size:9.8px;letter-spacing:.1px">ŠT.PREB NA HIŠNI ŠT.:</div><div class="it" style="left:246px;top:547px;font-size:9.16px;letter-spacing:.1px">DATUM ROJSTVA:</div><div class="fi" style="left:364px;top:480px;width:129px;height:15px"></div><div class="fi" style="left:497px;top:480px;width:129px;height:15px"></div><div class="fi fsel" style="left:364px;top:497px;width:83px;height:15px"></div><div class="fi fsel" style="left:451px;top:497px;width:136px;height:15px"></div><div class="fi" style="left:590px;top:497px;width:35px;height:15px"></div><div class="fi" style="left:364px;top:513px;width:99px;height:15px"></div><div class="fi fsel" style="left:467px;top:513px;width:77px;height:15px"></div><div class="fi fsel" style="left:548px;top:513px;width:76px;height:15px"></div><div class="fi" style="left:364px;top:529px;width:31px;height:15px"></div><div class="fi" style="left:416px;top:529px;width:31px;height:15px"></div><div class="fi" style="left:364px;top:545px;width:76px;height:15px"></div><div class="fi" style="left:460px;top:545px;width:77px;height:15px"></div><div class="t" style="left:400px;top:531px;font-size:10.5px;color:#222">do</div><div class="t" style="left:445px;top:547px;font-size:10.5px;color:#222">do</div><div class="a" style="left:786px;top:452px;width:15px;height:156px;background:#f0f0f0"></div><div class="a" style="left:789px;top:457px;width:0;height:0;border-left:3.5px solid transparent;border-right:3.5px solid transparent;border-bottom:4px solid #333"></div><div class="a" style="left:789px;top:601px;width:0;height:0;border-left:3.5px solid transparent;border-right:3.5px solid transparent;border-top:4px solid #333"></div><div class="a" style="left:787px;top:466px;width:12px;height:129px;background:linear-gradient(90deg,#e4e4e4,#fafafa 40%,#d8d8d8);border:1px solid #b8b8b8;border-radius:2px"></div><div class="a" style="left:790px;top:526px;width:6px;height:5px;border-top:1px solid #666;border-bottom:1px solid #666"><div class="a" style="left:0;top:1px;width:6px;height:1px;background:#666"></div></div><div class="btn" style="left:247px;top:573px;width:181px">izpiši</div><div class="btn" style="left:434px;top:573px;width:84px;background:linear-gradient(#e8f6ff,#9fd2f4);border-color:#5a8ab0">preštej</div><div class="btn" style="left:525px;top:573px;width:100px">zbriši vnos</div><div class="rad" style="left:250px;top:591px;background:radial-gradient(circle at 50% 50%,#4ab0d8 1px,#0e4a6e 2.5px,#0e4a6e 3.3px,#f4f4f4 4px)"></div><div class="t" style="left:265px;top:592px;font-size:10.9px;color:#222">uredi po prebivalcih</div><div class="rad" style="left:374px;top:591px"></div><div class="t" style="left:392px;top:592px;font-size:10.6px;color:#222">uredi po naslovih</div><div class="rad" style="left:491px;top:591px"></div><div class="t" style="left:509px;top:592px;font-size:11px;color:#222">izpiši samo naslove</div><div class="t" style="left:698px;top:615px;font-size:10px;color:#8aaad0"><span class="cond" style="transform:scaleX(.806)">© Občina LUČE, Realis d.o.o.</span></div><div class="a" style="left:9px;top:472px;width:56px;height:18px;border:3px solid #e8141c"></div><div class="a" style="left:431px;top:570px;width:90px;height:19px;border:3px solid #e8141c"></div><svg class="a" style="left:0;top:0" width="851" height="627"><path d="M64 479 L414 570.5" stroke="#ee1a1a" stroke-width="5.5"/><path d="M433 575.5 L413.5 560.5 L407 582.5Z" fill="#ee1a1a"/></svg><svg class="a" style="left:470px;top:584px" width="12" height="17" viewBox="0 0 12 17"><path d="M1 1 V13 L4 10 L6.5 15.5 L8.5 14.5 L6 9.5 H10Z" fill="#fff" stroke="#333" stroke-width="1"/></svg></body></html>
